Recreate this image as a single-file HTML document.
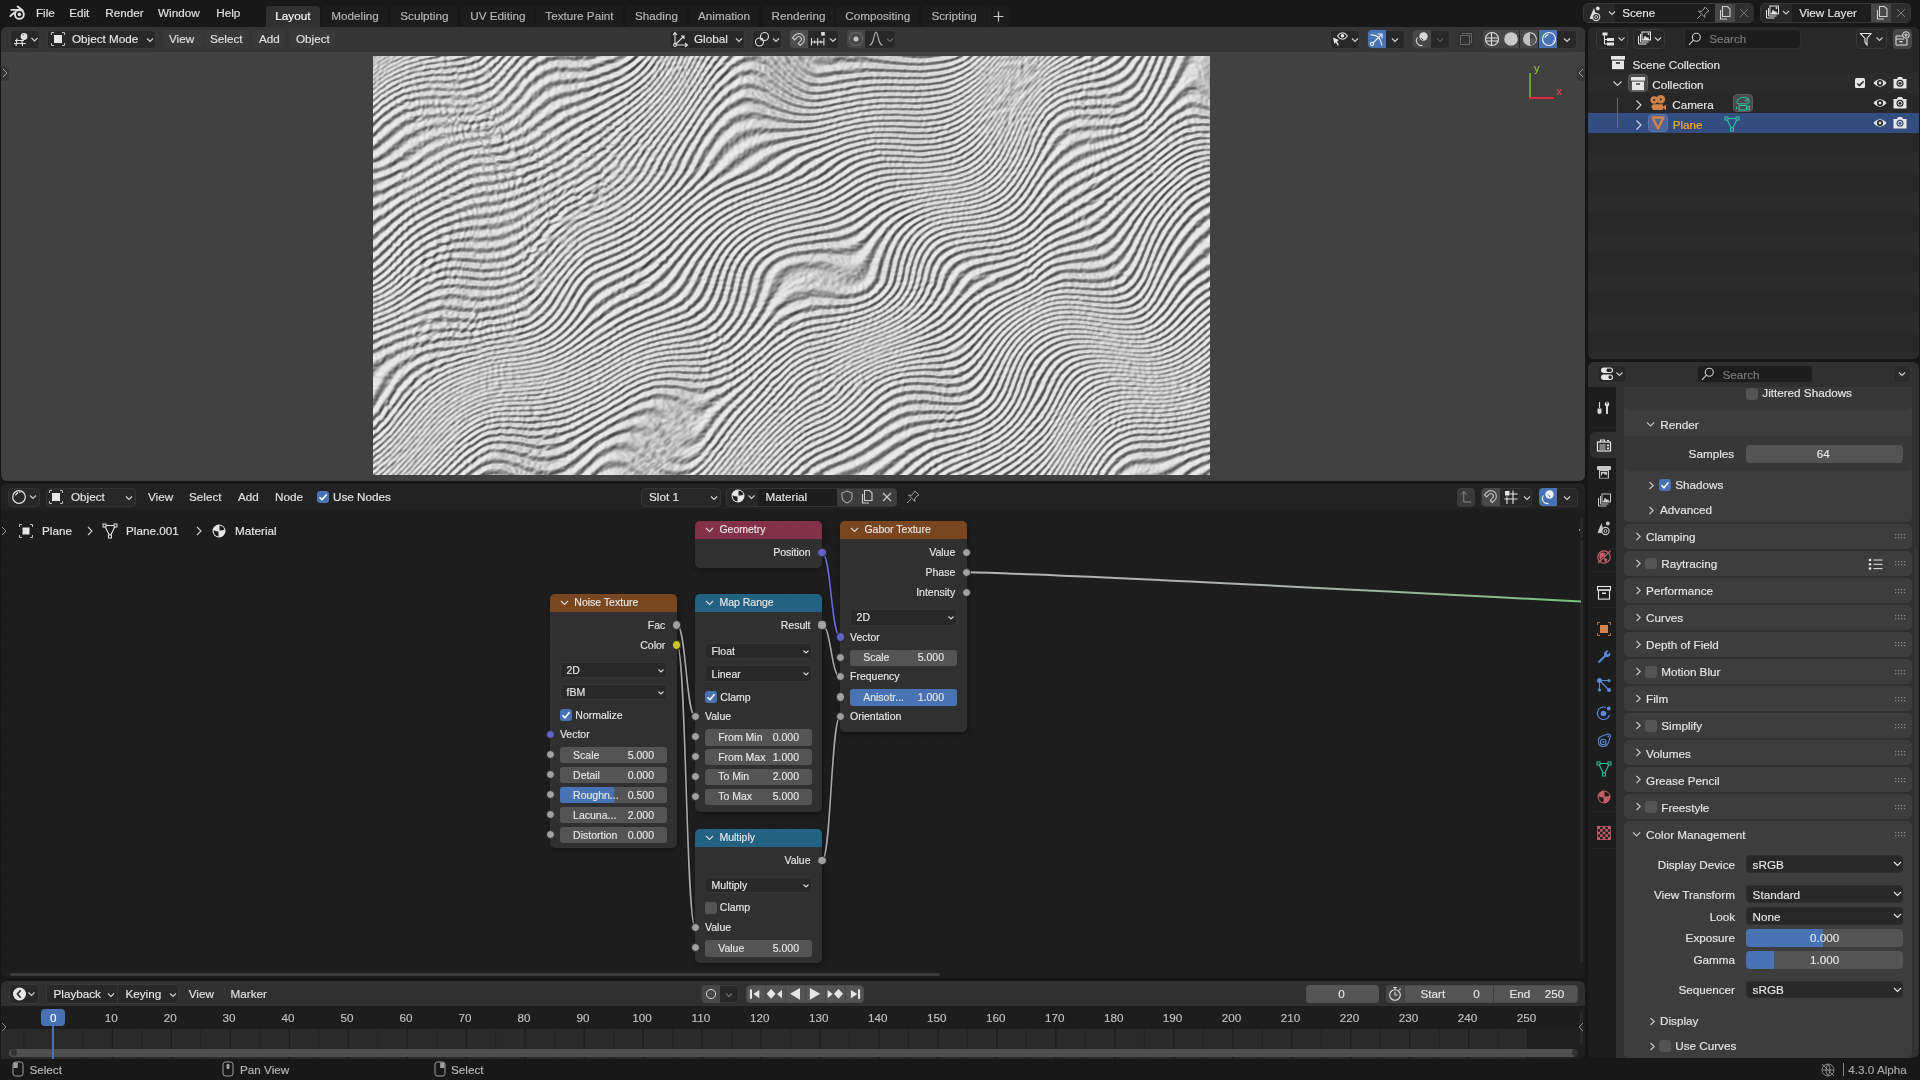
<!DOCTYPE html>
<html><head><meta charset="utf-8"><style>*{box-sizing:border-box;margin:0;padding:0}
html,body{width:1920px;height:1080px;overflow:hidden;background:#161616;font-family:"Liberation Sans",sans-serif;font-size:11.7px;color:#e6e6e6;position:relative}
.a{position:absolute}
.tx{position:absolute;white-space:nowrap;line-height:14px;-webkit-text-stroke:0.15px currentColor}
svg{position:absolute;overflow:visible}
</style></head><body>
<div id="root" style="position:absolute;left:0;top:0;width:1920px;height:1080px;overflow:hidden;will-change:transform">
<div class="a" style="left:0px;top:0px;width:1920px;height:27px;background:#181818;border-radius:0px;"></div>
<div class="a" style="left:1px;top:27px;width:1584px;height:454px;background:#414141;border-radius:6px;"></div>
<div class="a" style="left:1px;top:27px;width:1584px;height:25px;background:#353535;border-radius:0px;border-radius:6px 6px 0 0"></div>
<div class="a" style="left:1px;top:483px;width:1584px;height:495px;background:#1d1d1d;border-radius:6px;"></div>
<div class="a" style="left:1px;top:981px;width:1584px;height:78px;background:#1d1d1d;border-radius:6px;"></div>
<div class="a" style="left:1px;top:981px;width:1584px;height:25px;background:#303030;border-radius:0px;border-radius:6px 6px 0 0"></div>
<div class="a" style="left:1588px;top:27px;width:331px;height:332px;background:#282828;border-radius:6px;"></div>
<div class="a" style="left:1588px;top:27px;width:331px;height:25px;background:#282828;border-radius:0px;border-radius:6px 6px 0 0"></div>
<div class="a" style="left:1588px;top:362px;width:331px;height:696px;background:#303030;border-radius:6px;"></div>
<div class="a" style="left:0px;top:1059px;width:1920px;height:21px;background:#181818;border-radius:0px;"></div>
<svg style="left:0px;top:0px" width="30" height="27" viewBox="0 0 30 27"><g fill="none" stroke="#e0e0e0" stroke-width="1.9" stroke-linecap="round"><circle cx="19.4" cy="14.4" r="4.4"/><path d="M17.6 6.6 L22.6 10.6"/><path d="M11.3 9.9 L18.5 9.9"/><path d="M10.4 16.1 L14.6 12.6"/></g><circle cx="19.4" cy="14.4" r="1.8" fill="#e0e0e0"/></svg>
<div class="tx" style="left:35.90px;top:6.32px;color:#e0e0e0;font-size:11.7px;">File</div>
<div class="tx" style="left:69.20px;top:6.32px;color:#e0e0e0;font-size:11.7px;">Edit</div>
<div class="tx" style="left:105.30px;top:6.32px;color:#e0e0e0;font-size:11.7px;">Render</div>
<div class="tx" style="left:158.00px;top:6.32px;color:#e0e0e0;font-size:11.7px;">Window</div>
<div class="tx" style="left:216.20px;top:6.32px;color:#e0e0e0;font-size:11.7px;">Help</div>
<div class="a" style="left:266px;top:6px;width:54px;height:21px;background:#303030;border-radius:0px;border-radius:4px 4px 0 0"></div>
<div class="tx" style="left:275.30px;top:9.02px;color:#ffffff;font-size:11.7px;">Layout</div>
<div class="a" style="left:322.3px;top:6px;width:65.47812499999999px;height:21px;background:#1c1c1c;border-radius:0px;border-radius:4px 4px 0 0"></div>
<div class="tx" style="left:331.30px;top:9.02px;color:#b8b8b8;font-size:11.7px;">Modeling</div>
<div class="a" style="left:391.3px;top:6px;width:66.128125px;height:21px;background:#1c1c1c;border-radius:0px;border-radius:4px 4px 0 0"></div>
<div class="tx" style="left:400.30px;top:9.02px;color:#b8b8b8;font-size:11.7px;">Sculpting</div>
<div class="a" style="left:461.3px;top:6px;width:73.27499999999999px;height:21px;background:#1c1c1c;border-radius:0px;border-radius:4px 4px 0 0"></div>
<div class="tx" style="left:470.30px;top:9.02px;color:#b8b8b8;font-size:11.7px;">UV Editing</div>
<div class="a" style="left:536.3px;top:6px;width:86.28124999999999px;height:21px;background:#1c1c1c;border-radius:0px;border-radius:4px 4px 0 0"></div>
<div class="tx" style="left:545.30px;top:9.02px;color:#b8b8b8;font-size:11.7px;">Texture Paint</div>
<div class="a" style="left:626px;top:6px;width:60.934374999999996px;height:21px;background:#1c1c1c;border-radius:0px;border-radius:4px 4px 0 0"></div>
<div class="tx" style="left:635.00px;top:9.02px;color:#b8b8b8;font-size:11.7px;">Shading</div>
<div class="a" style="left:689px;top:6px;width:70.02499999999999px;height:21px;background:#1c1c1c;border-radius:0px;border-radius:4px 4px 0 0"></div>
<div class="tx" style="left:698.00px;top:9.02px;color:#b8b8b8;font-size:11.7px;">Animation</div>
<div class="a" style="left:762.5px;top:6px;width:71.984375px;height:21px;background:#1c1c1c;border-radius:0px;border-radius:4px 4px 0 0"></div>
<div class="tx" style="left:771.50px;top:9.02px;color:#b8b8b8;font-size:11.7px;">Rendering</div>
<div class="a" style="left:836.3px;top:6px;width:83.028125px;height:21px;background:#1c1c1c;border-radius:0px;border-radius:4px 4px 0 0"></div>
<div class="tx" style="left:845.30px;top:9.02px;color:#b8b8b8;font-size:11.7px;">Compositing</div>
<div class="a" style="left:922.4px;top:6px;width:63.51875px;height:21px;background:#1c1c1c;border-radius:0px;border-radius:4px 4px 0 0"></div>
<div class="tx" style="left:931.40px;top:9.02px;color:#b8b8b8;font-size:11.7px;">Scripting</div>
<div class="a" style="left:987px;top:6px;width:22px;height:21px;background:#1c1c1c;border-radius:0px;border-radius:4px 4px 0 0"></div>
<svg style="left:992px;top:10px" width="13" height="13" viewBox="0 0 13 13"><path d="M6.5 1.5 V11.5 M1.5 6.5 H11.5" stroke="#c8c8c8" stroke-width="1.2"/></svg>
<div class="a" style="left:1583px;top:3px;width:171px;height:20px;background:#282828;border-radius:5px;border:1px solid #383838"></div>
<div class="a" style="left:1615px;top:4px;width:100px;height:18px;background:#1d1d1d;border-radius:0px;"></div>
<div class="a" style="left:1714.5px;top:4px;width:20px;height:18px;background:#474747;border-radius:0px;"></div>
<div class="a" style="left:1734.5px;top:4px;width:19px;height:18px;background:#2e2e2e;border-radius:0px;border-radius:0 4px 4px 0"></div>
<svg style="left:1586px;top:4px" width="30" height="18" viewBox="0 0 30 18"><path d="M8 4 L3.5 14.5 Q8 16 11 14 Z" fill="#e0e0e0"/><circle cx="11.8" cy="4.5" r="1.9" fill="#e0e0e0"/><circle cx="10.2" cy="13" r="3.6" fill="#282828" stroke="#e0e0e0" stroke-width="1.1"/><circle cx="10.2" cy="13" r="1.5" fill="none" stroke="#e0e0e0" stroke-width="0.9"/><path d="M25 7.5 L28 10.5 L31 7.5" fill="none" stroke="#d0d0d0" stroke-width="1.1" transform="translate(-2,0)"/></svg>
<div class="tx" style="left:1622.20px;top:6.22px;color:#e6e6e6;font-size:11.7px;">Scene</div>
<svg style="left:1695px;top:5px" width="16" height="16" viewBox="0 0 16 16"><path d="M10 2 L14 6 L12 7 L9.5 10 L10 12.5 L3.5 6 L6 6.5 L9 4 Z" fill="none" stroke="#9a9a9a" stroke-width="1"/><path d="M6 10 L2 14" stroke="#9a9a9a" stroke-width="1"/></svg>
<svg style="left:1717px;top:5px" width="16" height="16" viewBox="0 0 16 16"><path d="M5.5 1.5 H10.5 L13 4 V11.5 H5.5 Z" fill="none" stroke="#d0d0d0" stroke-width="1.1"/><path d="M3.5 5 V14 H10" fill="none" stroke="#d0d0d0" stroke-width="1.1"/></svg>
<svg style="left:1737px;top:6px" width="14" height="14" viewBox="0 0 14 14"><path d="M3 3 L11 11 M11 3 L3 11" stroke="#7a7a7a" stroke-width="1"/></svg>
<div class="a" style="left:1760.3px;top:3px;width:151px;height:20px;background:#282828;border-radius:5px;border:1px solid #383838"></div>
<div class="a" style="left:1791.5px;top:4px;width:80px;height:18px;background:#1d1d1d;border-radius:0px;"></div>
<div class="a" style="left:1871.4px;top:4px;width:20px;height:18px;background:#474747;border-radius:0px;"></div>
<div class="a" style="left:1891.4px;top:4px;width:19px;height:18px;background:#2e2e2e;border-radius:0px;border-radius:0 4px 4px 0"></div>
<svg style="left:1764px;top:5px" width="30" height="16" viewBox="0 0 30 16"><rect x="6" y="1" width="8.5" height="8" fill="none" stroke="#e0e0e0" stroke-width="1"/><path d="M7 9 L9 4.5 L11 7 L12 6 L13.5 9 Z" fill="#e0e0e0"/><circle cx="12.5" cy="3" r="0.9" fill="#e0e0e0"/><path d="M4.5 3 V11 H12.5 M2.5 5 V13 H10.5" fill="none" stroke="#e0e0e0" stroke-width="1"/><path d="M19 6 L22 9 L25 6" fill="none" stroke="#d0d0d0" stroke-width="1.1"/></svg>
<div class="tx" style="left:1799.20px;top:6.22px;color:#e6e6e6;font-size:11.7px;">View Layer</div>
<svg style="left:1874px;top:5px" width="16" height="16" viewBox="0 0 16 16"><path d="M5.5 1.5 H10.5 L13 4 V11.5 H5.5 Z" fill="none" stroke="#d0d0d0" stroke-width="1.1"/><path d="M3.5 5 V14 H10" fill="none" stroke="#d0d0d0" stroke-width="1.1"/></svg>
<svg style="left:1894px;top:6px" width="14" height="14" viewBox="0 0 14 14"><path d="M3 3 L11 11 M11 3 L3 11" stroke="#7a7a7a" stroke-width="1"/></svg>
<div class="a" style="left:10px;top:29.5px;width:30px;height:19px;background:#282828;border-radius:4px;border:1px solid #393939"></div>
<svg style="left:12px;top:30px" width="30" height="18" viewBox="0 0 30 18"><g stroke="#e0e0e0" stroke-width="1.2" fill="none"><path d="M3 10.5 H12 M2 13.5 H14 M5 8.5 L4 16 M10 11 L10.5 16"/></g><circle cx="12" cy="6.5" r="3.4" fill="#e0e0e0"/><path d="M10.5 5.5 Q11 4.5 12 4.3" stroke="#555" stroke-width="0.7" fill="none"/><path d="M19.5 8 L22.5 11 L25.5 8" fill="none" stroke="#d0d0d0" stroke-width="1.1"/></svg>
<div class="a" style="left:47px;top:29.5px;width:109px;height:19px;background:#282828;border-radius:4px;border:1px solid #393939"></div>
<svg style="left:50px;top:31px" width="16" height="16" viewBox="0 0 16 16"><rect x="4" y="4" width="8" height="8" fill="#e6e6e6"/><path d="M1.5 4 V1.5 H4 M12 1.5 H14.5 V4 M14.5 12 V14.5 H12 M4 14.5 H1.5 V12" fill="none" stroke="#bdbdbd" stroke-width="1"/></svg>
<div class="tx" style="left:72.00px;top:31.82px;color:#e6e6e6;font-size:11.7px;">Object Mode</div>
<svg style="left:146px;top:36.5px" width="8" height="6" viewBox="0 0 8 6"><path d="M1 1.5 L4 4.5 L7 1.5" fill="none" stroke="#d0d0d0" stroke-width="1.2"/></svg>
<div class="a" style="left:163px;top:30px;width:40px;height:18px;background:#393939;border-radius:4px;"></div>
<div class="tx" style="left:169.00px;top:31.82px;color:#e0e0e0;font-size:11.7px;">View</div>
<div class="a" style="left:204px;top:30px;width:45px;height:18px;background:#393939;border-radius:4px;"></div>
<div class="tx" style="left:210.00px;top:31.82px;color:#e0e0e0;font-size:11.7px;">Select</div>
<div class="a" style="left:253px;top:30px;width:32px;height:18px;background:#393939;border-radius:4px;"></div>
<div class="tx" style="left:259.00px;top:31.82px;color:#e0e0e0;font-size:11.7px;">Add</div>
<div class="a" style="left:289px;top:30px;width:46px;height:18px;background:#393939;border-radius:4px;"></div>
<div class="tx" style="left:296.00px;top:31.82px;color:#e0e0e0;font-size:11.7px;">Object</div>
<div class="a" style="left:669px;top:29.5px;width:76px;height:19px;background:#282828;border-radius:4px;border:1px solid #393939"></div>
<svg style="left:672px;top:31px" width="17" height="17" viewBox="0 0 17 17"><g fill="none" stroke="#e0e0e0" stroke-width="1.1"><path d="M3 14 V2 M1 4 L3 1.5 L5 4 M3 14 H15 M13 12 L15.5 14 L13 16 M3 14 L12 5 M9 5 H12 V8"/><circle cx="3" cy="14" r="1.4" fill="#282828"/></g></svg>
<div class="tx" style="left:694.00px;top:31.82px;color:#e6e6e6;font-size:11.7px;">Global</div>
<svg style="left:735.4px;top:36.5px" width="8" height="6" viewBox="0 0 8 6"><path d="M1 1.5 L4 4.5 L7 1.5" fill="none" stroke="#d0d0d0" stroke-width="1.2"/></svg>
<div class="a" style="left:752px;top:29.5px;width:30px;height:19px;background:#282828;border-radius:4px;border:1px solid #393939"></div>
<svg style="left:754px;top:30px" width="16" height="18" viewBox="0 0 16 18"><g fill="none" stroke="#e0e0e0" stroke-width="1.1"><circle cx="10.5" cy="6.5" r="4"/><circle cx="5.5" cy="12" r="4"/></g><circle cx="7.8" cy="9.2" r="1.3" fill="#e0e0e0"/></svg>
<svg style="left:772px;top:36.5px" width="8" height="6" viewBox="0 0 8 6"><path d="M1 1.5 L4 4.5 L7 1.5" fill="none" stroke="#d0d0d0" stroke-width="1.2"/></svg>
<div class="a" style="left:789px;top:29.5px;width:50px;height:19px;background:#282828;border-radius:4px;border:1px solid #393939"></div>
<div class="a" style="left:789.5px;top:30px;width:18px;height:18px;background:#4d4d4d;border-radius:0px;border-radius:4px 0 0 4px"></div>
<svg style="left:790px;top:31px" width="17" height="16" viewBox="0 0 17 16"><g transform="rotate(45 8.5 8.5)" fill="none" stroke="#c8c8c8" stroke-width="1.1"><path d="M3 11.5 V8 A5.5 5.5 0 0 1 14 8 V11.5 H11 V8 A2.5 2.5 0 0 0 6 8 V11.5 Z"/></g></svg>
<svg style="left:810px;top:30px" width="20" height="18" viewBox="0 0 20 18"><g stroke="#e0e0e0" stroke-width="1.1" fill="none"><path d="M1.5 12 H14 M1.5 8 V15.5 M7.7 8 V15.5 M13.9 8 V15.5 M4.6 10.5 V13.5 M10.8 10.5 V13.5"/></g><rect x="11.2" y="2" width="3.6" height="3.6" fill="#e0e0e0"/></svg>
<svg style="left:829px;top:36.5px" width="8" height="6" viewBox="0 0 8 6"><path d="M1 1.5 L4 4.5 L7 1.5" fill="none" stroke="#d0d0d0" stroke-width="1.2"/></svg>
<div class="a" style="left:846px;top:29.5px;width:50px;height:19px;background:#282828;border-radius:4px;border:1px solid #393939"></div>
<div class="a" style="left:846.5px;top:30px;width:18px;height:18px;background:#474747;border-radius:0px;border-radius:4px 0 0 4px"></div>
<svg style="left:847px;top:30px" width="18" height="18" viewBox="0 0 18 18"><circle cx="9" cy="9" r="6.6" fill="none" stroke="#6a6a6a" stroke-width="1"/><circle cx="9" cy="9" r="2.5" fill="#c4c4c4"/></svg>
<svg style="left:868px;top:30px" width="18" height="18" viewBox="0 0 18 18"><path d="M1.5 15 Q4 15 5.5 9 Q7 2 8 2 Q9 2 10.5 9 Q12 15 14.5 15" fill="none" stroke="#bdbdbd" stroke-width="1.1"/></svg>
<svg style="left:886px;top:36.5px" width="8" height="6" viewBox="0 0 8 6"><path d="M1 1.5 L4 4.5 L7 1.5" fill="none" stroke="#6a6a6a" stroke-width="1.2"/></svg>
<div class="a" style="left:1330px;top:29.5px;width:30px;height:19px;background:#282828;border-radius:4px;border:1px solid #393939"></div>
<svg style="left:1331px;top:30px" width="22" height="18" viewBox="0 0 22 18"><path d="M6.5 6 Q11.5 -0.5 16.5 6 Q11.5 12.5 6.5 6 Z" fill="none" stroke="#e6e6e6" stroke-width="1.1"/><circle cx="11.5" cy="5.8" r="1.8" fill="#e6e6e6"/><path d="M2 7.5 L8 10 L6 11.5 L8 15 L6.8 15.8 L4.8 12.3 L3.3 14 Z" fill="#e6e6e6"/></svg>
<svg style="left:1350.5px;top:36.5px" width="8" height="6" viewBox="0 0 8 6"><path d="M1 1.5 L4 4.5 L7 1.5" fill="none" stroke="#d0d0d0" stroke-width="1.2"/></svg>
<div class="a" style="left:1367px;top:29.5px;width:38px;height:19px;background:#282828;border-radius:4px;border:1px solid #393939"></div>
<div class="a" style="left:1367.5px;top:30px;width:18px;height:18px;background:#4772b3;border-radius:0px;border-radius:4px 0 0 4px"></div>
<svg style="left:1368px;top:30px" width="18" height="18" viewBox="0 0 18 18"><g fill="none" stroke="#f0f0f0" stroke-width="1.1"><path d="M2.5 5 Q12 4 14 15.5"/><path d="M4.5 13.5 L13.5 4.5 M9.5 4 H14 V8.5"/><circle cx="4" cy="14" r="1.6" fill="#4772b3"/></g></svg>
<svg style="left:1391px;top:36.5px" width="8" height="6" viewBox="0 0 8 6"><path d="M1 1.5 L4 4.5 L7 1.5" fill="none" stroke="#d0d0d0" stroke-width="1.2"/></svg>
<div class="a" style="left:1412px;top:29.5px;width:38px;height:19px;background:#282828;border-radius:4px;border:1px solid #393939"></div>
<div class="a" style="left:1412.5px;top:30px;width:18px;height:18px;background:#474747;border-radius:0px;border-radius:4px 0 0 4px"></div>
<svg style="left:1413px;top:30px" width="18" height="18" viewBox="0 0 18 18"><circle cx="10.5" cy="6.5" r="4.2" fill="#d8d8d8"/><path d="M9.5 15.5 A5 5 0 0 1 4.5 7.5" fill="none" stroke="#d8d8d8" stroke-width="1.1"/><path d="M8 8 L10 10" stroke="#474747" stroke-width="1"/></svg>
<svg style="left:1436px;top:36.5px" width="8" height="6" viewBox="0 0 8 6"><path d="M1 1.5 L4 4.5 L7 1.5" fill="none" stroke="#5a5a5a" stroke-width="1.2"/></svg>
<div class="a" style="left:1457px;top:29.5px;width:18px;height:19px;background:#303030;border-radius:4px;border:1px solid #363636"></div>
<svg style="left:1458px;top:31px" width="16" height="16" viewBox="0 0 16 16"><g fill="none" stroke="#666" stroke-width="1"><rect x="2.5" y="4.5" width="9" height="9"/><path d="M4.5 4.5 V2.5 H13.5 V11.5 H11.5"/></g></svg>
<div class="a" style="left:1482px;top:29.5px;width:95px;height:19px;background:#282828;border-radius:4px;border:1px solid #393939"></div>
<div class="a" style="left:1482.5px;top:30px;width:18px;height:18px;background:#474747;border-radius:0px;border-radius:4px 0 0 4px"></div>
<div class="a" style="left:1501.3px;top:30px;width:18px;height:18px;background:#474747;border-radius:0px;"></div>
<div class="a" style="left:1520.3px;top:30px;width:18px;height:18px;background:#474747;border-radius:0px;"></div>
<div class="a" style="left:1539px;top:30px;width:18px;height:18px;background:#4772b3;border-radius:0px;"></div>
<svg style="left:1483px;top:30px" width="18" height="18" viewBox="0 0 18 18"><g fill="none" stroke="#e0e0e0" stroke-width="1.1"><circle cx="9" cy="9" r="6.5"/><path d="M2.5 8 H15.5 M2.5 11 H15.5 M8.5 2.5 V15.5"/></g></svg>
<svg style="left:1502px;top:30px" width="18" height="18" viewBox="0 0 18 18"><circle cx="9" cy="9" r="6.8" fill="#c8c8c8"/></svg>
<svg style="left:1521px;top:30px" width="18" height="18" viewBox="0 0 18 18"><circle cx="9" cy="9" r="6.3" fill="none" stroke="#e0e0e0" stroke-width="1.1"/><path d="M9 2.7 A6.3 6.3 0 0 0 2.7 9 A6.3 6.3 0 0 0 9 15.3 Z" fill="#c0c0c0"/><path d="M9 9 H15.3 A6.3 6.3 0 0 1 9 15.3 Z" fill="#5a5a5a"/></svg>
<svg style="left:1540px;top:30px" width="18" height="18" viewBox="0 0 18 18"><circle cx="9" cy="9" r="6.5" fill="none" stroke="#f0f0f0" stroke-width="1.2"/><path d="M5 8 Q5.5 5 8.5 4.5" fill="none" stroke="#f0f0f0" stroke-width="1.1"/><path d="M14 10 L12.5 13" stroke="#f0f0f0" stroke-width="0.8" stroke-dasharray="1 1"/></svg>
<svg style="left:1563px;top:36.5px" width="8" height="6" viewBox="0 0 8 6"><path d="M1 1.5 L4 4.5 L7 1.5" fill="none" stroke="#d0d0d0" stroke-width="1.2"/></svg>
<div class="a" style="left:373px;top:56px;width:837px;height:419px;overflow:hidden;background:#b0b0b0"><svg style="left:0;top:0;overflow:hidden" width="837" height="419">
<defs><linearGradient id="tlg" x1="0" y1="0" x2="0" y2="1"><stop offset="0" stop-color="#000" stop-opacity="0"/><stop offset="0.5" stop-color="#000" stop-opacity="1"/><stop offset="1" stop-color="#000" stop-opacity="0"/></linearGradient>
<pattern id="tpt" width="50" height="7.5" patternUnits="userSpaceOnUse" patternTransform="rotate(-30)"><rect width="50" height="7.5" fill="url(#tlg)"/></pattern></defs>
<filter id="tfp" x="0" y="0" width="100%" height="100%" color-interpolation-filters="sRGB">
<feTurbulence type="fractalNoise" baseFrequency="0.0045" numOctaves="2" seed="4" result="n"/>
<feDisplacementMap in="SourceGraphic" in2="n" scale="230" xChannelSelector="R" yChannelSelector="G" result="dm"/>
<feGaussianBlur in="dm" stdDeviation="1.1" result="c"/>
<feDiffuseLighting in="c" surfaceScale="3" diffuseConstant="1" lighting-color="#ffffff" result="d"><feDistantLight azimuth="225" elevation="50"/></feDiffuseLighting>
<feComponentTransfer in="d"><feFuncR type="linear" slope="0.68" intercept="0.245"/><feFuncG type="linear" slope="0.68" intercept="0.245"/><feFuncB type="linear" slope="0.68" intercept="0.245"/></feComponentTransfer>
</filter>
<rect x="-120" y="-120" width="1077" height="659" fill="url(#tpt)" filter="url(#tfp)"/>
</svg></div>
<div class="a" style="left:1529px;top:73px;width:2px;height:25px;background:#6fa11f;border-radius:0px;"></div>
<div class="a" style="left:1529px;top:97px;width:25px;height:2px;background:#d52b3a;border-radius:0px;"></div>
<div class="tx" style="left:1534.00px;top:61.06px;color:#8bc23a;font-size:11px;">y</div>
<div class="tx" style="left:1556.50px;top:84.06px;color:#e8404e;font-size:11px;">x</div>
<div class="a" style="left:1px;top:66px;width:8px;height:15px;background:#363636;border-radius:0px;border-radius:0 4px 4px 0"></div>
<svg style="left:1px;top:67px" width="8" height="12" viewBox="0 0 8 12"><path d="M2 2 L6 6 L2 10" fill="none" stroke="#9a9a9a" stroke-width="1"/></svg>
<div class="a" style="left:1577px;top:66px;width:8px;height:15px;background:#363636;border-radius:0px;border-radius:4px 0 0 4px"></div>
<svg style="left:1577px;top:67px" width="8" height="12" viewBox="0 0 8 12"><path d="M6 2 L2 6 L6 10" fill="none" stroke="#9a9a9a" stroke-width="1"/></svg>
<div class="a" style="left:1px;top:510px;width:1580px;height:468px;background-image:radial-gradient(circle, #262626 0.5px, transparent 1.1px);background-size:18.1px 18.1px;background-position:-2.5px 1.95px"></div>
<div class="a" style="left:1px;top:483px;width:1584px;height:26px;background:#222222;border-radius:0px;border-radius:6px 6px 0 0"></div>
<div class="a" style="left:8px;top:487.5px;width:31.5px;height:19px;background:#282828;border-radius:4px;border:1px solid #343434"></div>
<svg style="left:10px;top:488px" width="30" height="18" viewBox="0 0 30 18"><circle cx="9" cy="9" r="6.3" fill="none" stroke="#e6e6e6" stroke-width="1.2"/><path d="M5.6 7.5 Q6 5.3 8 4.6" fill="none" stroke="#e6e6e6" stroke-width="1.2"/><circle cx="9.8" cy="4.3" r="0.8" fill="#e6e6e6"/><path d="M20 7.5 L23 10.5 L26 7.5" fill="none" stroke="#d0d0d0" stroke-width="1.1"/></svg>
<div class="a" style="left:45.5px;top:487.5px;width:90px;height:19px;background:#282828;border-radius:4px;border:1px solid #343434"></div>
<svg style="left:48px;top:489px" width="16" height="16" viewBox="0 0 16 16"><rect x="4" y="4" width="8" height="8" fill="#e6e6e6"/><path d="M1.5 4 V1.5 H4 M12 1.5 H14.5 V4 M14.5 12 V14.5 H12 M4 14.5 H1.5 V12" fill="none" stroke="#bdbdbd" stroke-width="1"/></svg>
<div class="tx" style="left:71.00px;top:489.82px;color:#e6e6e6;font-size:11.7px;">Object</div>
<svg style="left:125px;top:494.5px" width="8" height="6" viewBox="0 0 8 6"><path d="M1 1.5 L4 4.5 L7 1.5" fill="none" stroke="#d0d0d0" stroke-width="1.2"/></svg>
<div class="tx" style="left:148.00px;top:489.82px;color:#e0e0e0;font-size:11.7px;">View</div>
<div class="tx" style="left:189.00px;top:489.82px;color:#e0e0e0;font-size:11.7px;">Select</div>
<div class="tx" style="left:238.00px;top:489.82px;color:#e0e0e0;font-size:11.7px;">Add</div>
<div class="tx" style="left:275.00px;top:489.82px;color:#e0e0e0;font-size:11.7px;">Node</div>
<div class="a" style="left:317px;top:491px;width:12px;height:12px;background:#4772b3;border-radius:3px;"></div>
<svg style="left:317px;top:491px" width="12" height="12" viewBox="0 0 12 12"><path d="M2.5 6.2 L5 8.7 L9.8 3.4" fill="none" stroke="#fff" stroke-width="1.6"/></svg>
<div class="tx" style="left:333.00px;top:489.82px;color:#e6e6e6;font-size:11.7px;">Use Nodes</div>
<div class="a" style="left:641px;top:487.5px;width:80px;height:19px;background:#282828;border-radius:4px;border:1px solid #343434"></div>
<div class="tx" style="left:649.00px;top:489.82px;color:#e6e6e6;font-size:11.7px;">Slot 1</div>
<svg style="left:710px;top:494.5px" width="8" height="6" viewBox="0 0 8 6"><path d="M1 1.5 L4 4.5 L7 1.5" fill="none" stroke="#d0d0d0" stroke-width="1.2"/></svg>
<div class="a" style="left:726.3px;top:487.5px;width:171px;height:19px;background:#282828;border-radius:4px;border:1px solid #343434"></div>
<div class="a" style="left:757.6px;top:488.5px;width:80px;height:17px;background:#1d1d1d;border-radius:0px;"></div>
<div class="a" style="left:837px;top:488.5px;width:20px;height:17px;background:#3d3d3d;border-radius:0px;"></div>
<div class="a" style="left:857px;top:488.5px;width:20px;height:17px;background:#3d3d3d;border-radius:0px;"></div>
<div class="a" style="left:877px;top:488.5px;width:19.5px;height:17px;background:#3d3d3d;border-radius:0px;border-radius:0 3px 3px 0"></div>
<svg style="left:730px;top:488px" width="30" height="18" viewBox="0 0 30 18"><circle cx="8" cy="8" r="6.5" fill="#e6e6e6"/><path d="M8.5 7.5 V2.4 A5.5 5.5 0 0 1 13.4 6.8 Q11 7.9 8.5 7.5 Z" fill="#1f1f1f"/><path d="M7.5 8.6 V13.6 A5.5 5.5 0 0 1 2.6 7.3 Q5 8.5 7.5 8.6 Z" fill="#1f1f1f"/><path d="M18.5 7.5 L21.5 10.5 L24.5 7.5" fill="none" stroke="#d0d0d0" stroke-width="1.1"/></svg>
<div class="tx" style="left:765.50px;top:489.82px;color:#e6e6e6;font-size:11.7px;">Material</div>
<svg style="left:839px;top:489px" width="16" height="16" viewBox="0 0 16 16"><path d="M8 2 L13 4 V8 Q13 12 8 14 Q3 12 3 8 V4 Z" fill="none" stroke="#a8a8a8" stroke-width="1.1"/></svg>
<svg style="left:859px;top:489px" width="16" height="16" viewBox="0 0 16 16"><path d="M5.5 1.5 H10.5 L13 4 V11.5 H5.5 Z" fill="none" stroke="#d0d0d0" stroke-width="1.1"/><path d="M3.5 5 V14 H10" fill="none" stroke="#d0d0d0" stroke-width="1.1"/></svg>
<svg style="left:879px;top:489px" width="16" height="16" viewBox="0 0 16 16"><path d="M4 4 L12 12 M12 4 L4 12" stroke="#d0d0d0" stroke-width="1.1"/></svg>
<svg style="left:905px;top:489px" width="16" height="16" viewBox="0 0 16 16"><path d="M10 2 L14 6 L12 7 L9.5 10 L10 12.5 L3.5 6 L6 6.5 L9 4 Z" fill="none" stroke="#a0a0a0" stroke-width="1"/><path d="M6 10 L2 14" stroke="#a0a0a0" stroke-width="1"/></svg>
<div class="a" style="left:1456.7px;top:487.5px;width:18.3px;height:19px;background:#3a3a3a;border-radius:4px;"></div>
<svg style="left:1457px;top:488px" width="18" height="18" viewBox="0 0 18 18"><path d="M4 6.5 L6.8 3.5 L9.6 6.5 M6.8 3.5 V14 H14" fill="none" stroke="#8a8a8a" stroke-width="1"/></svg>
<div class="a" style="left:1481.4px;top:487.5px;width:51px;height:19px;background:#282828;border-radius:4px;border:1px solid #343434"></div>
<div class="a" style="left:1482px;top:488px;width:18px;height:18px;background:#484848;border-radius:0px;border-radius:4px 0 0 4px"></div>
<svg style="left:1482px;top:488px" width="18" height="18" viewBox="0 0 18 18"><g transform="rotate(45 8.5 8.5)" fill="none" stroke="#bdbdbd" stroke-width="1.1"><path d="M3 11.5 V8 A5.5 5.5 0 0 1 14 8 V11.5 H11 V8 A2.5 2.5 0 0 0 6 8 V11.5 Z"/></g></svg>
<svg style="left:1503px;top:488px" width="18" height="18" viewBox="0 0 18 18"><rect x="2" y="3" width="4.5" height="4.5" fill="#e6e6e6"/><path d="M1.5 11 H14.5 M4 8.5 V16 M10 2.5 V16 M7 6 H14.5" stroke="#e6e6e6" stroke-width="1.1" fill="none"/></svg>
<svg style="left:1522.5px;top:494.5px" width="8" height="6" viewBox="0 0 8 6"><path d="M1 1.5 L4 4.5 L7 1.5" fill="none" stroke="#d0d0d0" stroke-width="1.2"/></svg>
<div class="a" style="left:1538.6px;top:487.5px;width:39px;height:19px;background:#282828;border-radius:4px;border:1px solid #343434"></div>
<div class="a" style="left:1539px;top:488px;width:18px;height:18px;background:#4772b3;border-radius:0px;border-radius:4px 0 0 4px"></div>
<svg style="left:1539px;top:488px" width="18" height="18" viewBox="0 0 18 18"><circle cx="10.5" cy="6.5" r="4.2" fill="#f0f0f0"/><path d="M9.5 15.5 A5 5 0 0 1 4.5 7.5" fill="none" stroke="#f0f0f0" stroke-width="1.1"/><path d="M8.5 6 L11 9" stroke="#4772b3" stroke-width="0.9"/></svg>
<svg style="left:1563px;top:494.5px" width="8" height="6" viewBox="0 0 8 6"><path d="M1 1.5 L4 4.5 L7 1.5" fill="none" stroke="#d0d0d0" stroke-width="1.2"/></svg>
<svg style="left:0px;top:525px" width="8" height="12" viewBox="0 0 8 12"><path d="M2 2 L6 6 L2 10" fill="none" stroke="#9a9a9a" stroke-width="1"/></svg>
<svg style="left:18px;top:523px" width="16" height="16" viewBox="0 0 16 16"><rect x="4.5" y="4.5" width="7" height="7" fill="#e6e6e6"/><path d="M1.5 4 V1.5 H4 M12 1.5 H14.5 V4 M14.5 12 V14.5 H12 M4 14.5 H1.5 V12" fill="none" stroke="#bdbdbd" stroke-width="1"/></svg>
<div class="tx" style="left:42.00px;top:524.32px;color:#e6e6e6;font-size:11.7px;">Plane</div>
<svg style="left:86px;top:525px" width="8" height="12" viewBox="0 0 8 12"><path d="M2 2 L6 6 L2 10" fill="none" stroke="#d0d0d0" stroke-width="1.1"/></svg>
<svg style="left:102px;top:523px" width="16" height="16" viewBox="0 0 16 16"><path d="M2.5 2.5 H13.5 L8 13.5 Z" fill="none" stroke="#e6e6e6" stroke-width="1.1"/><rect x="1" y="1" width="3" height="3" fill="#1d1d1d" stroke="#e6e6e6" stroke-width="1"/><rect x="12" y="1" width="3" height="3" fill="#1d1d1d" stroke="#e6e6e6" stroke-width="1"/><rect x="6.5" y="12" width="3" height="3" fill="#1d1d1d" stroke="#e6e6e6" stroke-width="1"/></svg>
<div class="tx" style="left:126.00px;top:524.32px;color:#e6e6e6;font-size:11.7px;">Plane.001</div>
<svg style="left:195px;top:525px" width="8" height="12" viewBox="0 0 8 12"><path d="M2 2 L6 6 L2 10" fill="none" stroke="#d0d0d0" stroke-width="1.1"/></svg>
<svg style="left:211px;top:523px" width="16" height="16" viewBox="0 0 16 16"><circle cx="8" cy="8" r="6.5" fill="#e6e6e6"/><path d="M8.5 7.5 V2.4 A5.5 5.5 0 0 1 13.4 6.8 Q11 7.9 8.5 7.5 Z" fill="#1d1d1d"/><path d="M7.5 8.6 V13.6 A5.5 5.5 0 0 1 2.6 7.3 Q5 8.5 7.5 8.6 Z" fill="#1d1d1d"/></svg>
<div class="tx" style="left:235.00px;top:524.32px;color:#e6e6e6;font-size:11.7px;">Material</div>
<svg style="left:1577px;top:524px" width="8" height="12" viewBox="0 0 8 12"><path d="M6 2 L2 6 L6 10" fill="none" stroke="#9a9a9a" stroke-width="1"/></svg>
<div class="a" style="left:1580px;top:518px;width:3px;height:20px;background:#2a2a2a;border-radius:2px;"></div>
<div class="a" style="left:1580px;top:540px;width:3px;height:422px;background:#2a2a2a;border-radius:2px;"></div>
<div class="a" style="left:10px;top:973px;width:930px;height:3px;background:#3a3a3a;border-radius:2px;"></div>
<div class="a" style="left:1px;top:510px;width:1580px;height:468px;overflow:hidden"><svg style="left:-1px;top:-510px" width="1920" height="1080"><path d="M822 552.5 C831.1 552.5 831.1 636.8 840.2 636.8" fill="none" stroke="#111" stroke-width="3.2" opacity="0.6"/><path d="M822 552.5 C831.1 552.5 831.1 636.8 840.2 636.8" fill="none" stroke="#6a6ad0" stroke-width="1.6"/><path d="M822 625 C831.1 625 831.1 676.8 840.2 676.8" fill="none" stroke="#111" stroke-width="3.2" opacity="0.6"/><path d="M822 625 C831.1 625 831.1 676.8 840.2 676.8" fill="none" stroke="#a8a8a8" stroke-width="1.6"/><path d="M822 860.6 C831.1 860.6 831.1 716.5 840.2 716.5" fill="none" stroke="#111" stroke-width="3.2" opacity="0.6"/><path d="M822 860.6 C831.1 860.6 831.1 716.5 840.2 716.5" fill="none" stroke="#a8a8a8" stroke-width="1.6"/><path d="M677 625 C686.1 625 686.1 716.4 695.2 716.4" fill="none" stroke="#111" stroke-width="3.2" opacity="0.6"/><path d="M677 625 C686.1 625 686.1 716.4 695.2 716.4" fill="none" stroke="#a8a8a8" stroke-width="1.6"/><path d="M677 645 C686.1 645 686.1 927.6 695.2 927.6" fill="none" stroke="#111" stroke-width="3.2" opacity="0.6"/><path d="M677 645 C686.1 645 686.1 927.6 695.2 927.6" fill="none" stroke="#a8a8a8" stroke-width="1.6"/><defs><linearGradient id="gl" x1="967" y1="0" x2="1585" y2="0" gradientUnits="userSpaceOnUse"><stop offset="0" stop-color="#b4b4b4"/><stop offset="0.55" stop-color="#aab2aa"/><stop offset="1" stop-color="#74c27a"/></linearGradient></defs><path d="M967 572.3 C1060 574 1400 592 1584.5 601.8" fill="none" stroke="url(#gl)" stroke-width="2"/></svg></div>
<div class="a" style="left:696.2px;top:523px;width:126.8px;height:47px;background:rgba(0,0,0,0.35);border-radius:5px;filter:blur(2px)"></div>
<div class="a" style="left:695.2px;top:521px;width:126.8px;height:47px;background:#303030;border-radius:5px;"></div>
<div class="a" style="left:695.2px;top:521px;width:126.8px;height:18.2px;background:#83304a;border-radius:0px;border-radius:5px 5px 0 0"></div>
<svg style="left:704.7px;top:527px" width="9" height="6" viewBox="0 0 9 6"><path d="M1 1 L4.5 4.5 L8 1" fill="none" stroke="#d8d8d8" stroke-width="1.1"/></svg>
<div class="tx" style="left:719.40px;top:522.48px;color:#e6e6e6;font-size:10.5px;">Geometry</div>
<div class="tx" style="left:410.50px;width:400px;text-align:right;top:545.18px;color:#e6e6e6;font-size:10.5px;">Position</div>
<div class="a" style="left:817.4px;top:547.9px;width:9.2px;height:9.2px;border-radius:50%;background:#a1a1a1;border:1px solid #262626"></div>
<div class="a" style="left:817.4px;top:547.9px;width:9.2px;height:9.2px;border-radius:50%;background:#6363c7;border:1px solid #262626"></div>
<div class="a" style="left:841.2px;top:523px;width:126.8px;height:210.6px;background:rgba(0,0,0,0.35);border-radius:5px;filter:blur(2px)"></div>
<div class="a" style="left:840.2px;top:521px;width:126.8px;height:210.6px;background:#303030;border-radius:5px;"></div>
<div class="a" style="left:840.2px;top:521px;width:126.8px;height:18.2px;background:#79461f;border-radius:0px;border-radius:5px 5px 0 0"></div>
<svg style="left:849.7px;top:527px" width="9" height="6" viewBox="0 0 9 6"><path d="M1 1 L4.5 4.5 L8 1" fill="none" stroke="#d8d8d8" stroke-width="1.1"/></svg>
<div class="tx" style="left:864.40px;top:522.48px;color:#e6e6e6;font-size:10.5px;">Gabor Texture</div>
<div class="tx" style="left:555.30px;width:400px;text-align:right;top:545.08px;color:#e6e6e6;font-size:10.5px;">Value</div>
<div class="a" style="left:962.1999999999999px;top:547.8px;width:9.2px;height:9.2px;border-radius:50%;background:#a1a1a1;border:1px solid #262626"></div>
<div class="tx" style="left:555.30px;width:400px;text-align:right;top:564.98px;color:#e6e6e6;font-size:10.5px;">Phase</div>
<div class="a" style="left:962.1999999999999px;top:567.6999999999999px;width:9.2px;height:9.2px;border-radius:50%;background:#a1a1a1;border:1px solid #262626"></div>
<div class="tx" style="left:555.30px;width:400px;text-align:right;top:585.18px;color:#e6e6e6;font-size:10.5px;">Intensity</div>
<div class="a" style="left:962.1999999999999px;top:587.9px;width:9.2px;height:9.2px;border-radius:50%;background:#a1a1a1;border:1px solid #262626"></div>
<div class="a" style="left:849.9000000000001px;top:608.8px;width:107.4px;height:16.8px;background:#282828;border-radius:3px;border:1px solid #363636"></div>
<div class="tx" style="left:856.60px;top:610.28px;color:#e6e6e6;font-size:10.5px;">2D</div>
<svg style="left:947.0px;top:614.8px" width="8" height="6" viewBox="0 0 8 6"><path d="M1.5 1.5 L4 4 L6.5 1.5" fill="none" stroke="#d8d8d8" stroke-width="1.1"/></svg>
<div class="tx" style="left:850.00px;top:629.68px;color:#e6e6e6;font-size:10.5px;">Vector</div>
<div class="a" style="left:835.6px;top:632.4px;width:9.2px;height:9.2px;border-radius:50%;background:#6363c7;border:1px solid #262626"></div>
<div class="a" style="left:849.9000000000001px;top:649.6px;width:107.4px;height:16.4px;background:#545454;border-radius:3px;"></div>
<div class="tx" style="left:863.20px;top:650.18px;color:#e6e6e6;font-size:10.5px;">Scale</div>
<div class="tx" style="left:544.00px;width:400px;text-align:right;top:650.18px;color:#e6e6e6;font-size:10.5px;">5.000</div>
<div class="a" style="left:835.6px;top:652.6px;width:9.2px;height:9.2px;border-radius:50%;background:#a1a1a1;border:1px solid #262626"></div>
<div class="tx" style="left:850.00px;top:669.48px;color:#e6e6e6;font-size:10.5px;">Frequency</div>
<div class="a" style="left:835.6px;top:672.1999999999999px;width:9.2px;height:9.2px;border-radius:50%;background:#a1a1a1;border:1px solid #262626"></div>
<div class="a" style="left:849.9000000000001px;top:689.4px;width:107.4px;height:16.4px;background:#545454;border-radius:3px;"></div>
<div class="a" style="left:849.9000000000001px;top:689.4px;width:107.4px;height:16.4px;background:#4772b3;border-radius:0px;border-radius:3px"></div>
<div class="tx" style="left:863.20px;top:689.98px;color:#e6e6e6;font-size:10.5px;">Anisotr...</div>
<div class="tx" style="left:544.00px;width:400px;text-align:right;top:689.98px;color:#e6e6e6;font-size:10.5px;">1.000</div>
<div class="a" style="left:835.6px;top:692.4px;width:9.2px;height:9.2px;border-radius:50%;background:#a1a1a1;border:1px solid #262626"></div>
<div class="tx" style="left:850.00px;top:709.18px;color:#e6e6e6;font-size:10.5px;">Orientation</div>
<div class="a" style="left:835.6px;top:711.9px;width:9.2px;height:9.2px;border-radius:50%;background:#a1a1a1;border:1px solid #262626"></div>
<div class="a" style="left:551.1px;top:596px;width:126.9px;height:253.6px;background:rgba(0,0,0,0.35);border-radius:5px;filter:blur(2px)"></div>
<div class="a" style="left:550.1px;top:594px;width:126.9px;height:253.6px;background:#303030;border-radius:5px;"></div>
<div class="a" style="left:550.1px;top:594px;width:126.9px;height:18.2px;background:#79461f;border-radius:0px;border-radius:5px 5px 0 0"></div>
<svg style="left:559.6px;top:600px" width="9" height="6" viewBox="0 0 9 6"><path d="M1 1 L4.5 4.5 L8 1" fill="none" stroke="#d8d8d8" stroke-width="1.1"/></svg>
<div class="tx" style="left:574.30px;top:595.48px;color:#e6e6e6;font-size:10.5px;">Noise Texture</div>
<div class="tx" style="left:265.30px;width:400px;text-align:right;top:617.68px;color:#e6e6e6;font-size:10.5px;">Fac</div>
<div class="a" style="left:672.1999999999999px;top:620.4px;width:9.2px;height:9.2px;border-radius:50%;background:#a1a1a1;border:1px solid #262626"></div>
<div class="tx" style="left:265.30px;width:400px;text-align:right;top:637.68px;color:#e6e6e6;font-size:10.5px;">Color</div>
<div class="a" style="left:672.1999999999999px;top:640.4px;width:9.2px;height:9.2px;border-radius:50%;background:#a1a1a1;border:1px solid #262626"></div>
<div class="a" style="left:672.1999999999999px;top:640.4px;width:9.2px;height:9.2px;border-radius:50%;background:#c7c729;border:1px solid #262626"></div>
<div class="a" style="left:559.8000000000001px;top:661.6px;width:107.5px;height:16.8px;background:#282828;border-radius:3px;border:1px solid #363636"></div>
<div class="tx" style="left:566.50px;top:663.08px;color:#e6e6e6;font-size:10.5px;">2D</div>
<svg style="left:657.0px;top:667.6px" width="8" height="6" viewBox="0 0 8 6"><path d="M1.5 1.5 L4 4 L6.5 1.5" fill="none" stroke="#d8d8d8" stroke-width="1.1"/></svg>
<div class="a" style="left:559.8000000000001px;top:683.5px;width:107.5px;height:16.8px;background:#282828;border-radius:3px;border:1px solid #363636"></div>
<div class="tx" style="left:566.50px;top:684.98px;color:#e6e6e6;font-size:10.5px;">fBM</div>
<svg style="left:657.0px;top:689.5px" width="8" height="6" viewBox="0 0 8 6"><path d="M1.5 1.5 L4 4 L6.5 1.5" fill="none" stroke="#d8d8d8" stroke-width="1.1"/></svg>
<div class="a" style="left:560.3px;top:709.1px;width:11.7px;height:11.7px;background:#4772b3;border-radius:3px;"></div>
<svg style="left:560.3px;top:709.1px" width="12" height="12" viewBox="0 0 12 12"><path d="M2.5 6.2 L5 8.7 L9.5 3.3" fill="none" stroke="#fff" stroke-width="1.6"/></svg>
<div class="tx" style="left:575.30px;top:707.78px;color:#e6e6e6;font-size:10.5px;">Normalize</div>
<div class="tx" style="left:559.90px;top:727.28px;color:#e6e6e6;font-size:10.5px;">Vector</div>
<div class="a" style="left:545.5px;top:730.0px;width:9.2px;height:9.2px;border-radius:50%;background:#6363c7;border:1px solid #262626"></div>
<div class="a" style="left:559.8000000000001px;top:747.0px;width:107.5px;height:16.4px;background:#545454;border-radius:3px;"></div>
<div class="tx" style="left:573.10px;top:747.58px;color:#e6e6e6;font-size:10.5px;">Scale</div>
<div class="tx" style="left:254.00px;width:400px;text-align:right;top:747.58px;color:#e6e6e6;font-size:10.5px;">5.000</div>
<div class="a" style="left:545.5px;top:750.0px;width:9.2px;height:9.2px;border-radius:50%;background:#a1a1a1;border:1px solid #262626"></div>
<div class="a" style="left:559.8000000000001px;top:767.0px;width:107.5px;height:16.4px;background:#545454;border-radius:3px;"></div>
<div class="tx" style="left:573.10px;top:767.58px;color:#e6e6e6;font-size:10.5px;">Detail</div>
<div class="tx" style="left:254.00px;width:400px;text-align:right;top:767.58px;color:#e6e6e6;font-size:10.5px;">0.000</div>
<div class="a" style="left:545.5px;top:770.0px;width:9.2px;height:9.2px;border-radius:50%;background:#a1a1a1;border:1px solid #262626"></div>
<div class="a" style="left:559.8000000000001px;top:787.0px;width:107.5px;height:16.4px;background:#545454;border-radius:3px;"></div>
<div class="a" style="left:559.8000000000001px;top:787.0px;width:53.75px;height:16.4px;background:#4772b3;border-radius:0px;border-radius:3px 0 0 3px"></div>
<div class="tx" style="left:573.10px;top:787.58px;color:#e6e6e6;font-size:10.5px;">Roughn...</div>
<div class="tx" style="left:254.00px;width:400px;text-align:right;top:787.58px;color:#e6e6e6;font-size:10.5px;">0.500</div>
<div class="a" style="left:545.5px;top:790.0px;width:9.2px;height:9.2px;border-radius:50%;background:#a1a1a1;border:1px solid #262626"></div>
<div class="a" style="left:559.8000000000001px;top:807.0px;width:107.5px;height:16.4px;background:#545454;border-radius:3px;"></div>
<div class="tx" style="left:573.10px;top:807.58px;color:#e6e6e6;font-size:10.5px;">Lacuna...</div>
<div class="tx" style="left:254.00px;width:400px;text-align:right;top:807.58px;color:#e6e6e6;font-size:10.5px;">2.000</div>
<div class="a" style="left:545.5px;top:810.0px;width:9.2px;height:9.2px;border-radius:50%;background:#a1a1a1;border:1px solid #262626"></div>
<div class="a" style="left:559.8000000000001px;top:827.0px;width:107.5px;height:16.4px;background:#545454;border-radius:3px;"></div>
<div class="tx" style="left:573.10px;top:827.58px;color:#e6e6e6;font-size:10.5px;">Distortion</div>
<div class="tx" style="left:254.00px;width:400px;text-align:right;top:827.58px;color:#e6e6e6;font-size:10.5px;">0.000</div>
<div class="a" style="left:545.5px;top:830.0px;width:9.2px;height:9.2px;border-radius:50%;background:#a1a1a1;border:1px solid #262626"></div>
<div class="a" style="left:696.2px;top:596px;width:126.8px;height:217.7px;background:rgba(0,0,0,0.35);border-radius:5px;filter:blur(2px)"></div>
<div class="a" style="left:695.2px;top:594px;width:126.8px;height:217.7px;background:#303030;border-radius:5px;"></div>
<div class="a" style="left:695.2px;top:594px;width:126.8px;height:18.2px;background:#246283;border-radius:0px;border-radius:5px 5px 0 0"></div>
<svg style="left:704.7px;top:600px" width="9" height="6" viewBox="0 0 9 6"><path d="M1 1 L4.5 4.5 L8 1" fill="none" stroke="#d8d8d8" stroke-width="1.1"/></svg>
<div class="tx" style="left:719.40px;top:595.48px;color:#e6e6e6;font-size:10.5px;">Map Range</div>
<div class="tx" style="left:410.50px;width:400px;text-align:right;top:617.68px;color:#e6e6e6;font-size:10.5px;">Result</div>
<div class="a" style="left:817.4px;top:620.4px;width:9.2px;height:9.2px;border-radius:50%;background:#a1a1a1;border:1px solid #262626"></div>
<div class="a" style="left:704.9000000000001px;top:642.5px;width:107.4px;height:16.8px;background:#282828;border-radius:3px;border:1px solid #363636"></div>
<div class="tx" style="left:711.60px;top:643.98px;color:#e6e6e6;font-size:10.5px;">Float</div>
<svg style="left:802.0px;top:648.5px" width="8" height="6" viewBox="0 0 8 6"><path d="M1.5 1.5 L4 4 L6.5 1.5" fill="none" stroke="#d8d8d8" stroke-width="1.1"/></svg>
<div class="a" style="left:704.9000000000001px;top:665.4px;width:107.4px;height:16.8px;background:#282828;border-radius:3px;border:1px solid #363636"></div>
<div class="tx" style="left:711.60px;top:666.88px;color:#e6e6e6;font-size:10.5px;">Linear</div>
<svg style="left:802.0px;top:671.4px" width="8" height="6" viewBox="0 0 8 6"><path d="M1.5 1.5 L4 4 L6.5 1.5" fill="none" stroke="#d8d8d8" stroke-width="1.1"/></svg>
<div class="a" style="left:705.3px;top:690.9px;width:11.7px;height:11.7px;background:#4772b3;border-radius:3px;"></div>
<svg style="left:705.3px;top:690.9px" width="12" height="12" viewBox="0 0 12 12"><path d="M2.5 6.2 L5 8.7 L9.5 3.3" fill="none" stroke="#fff" stroke-width="1.6"/></svg>
<div class="tx" style="left:720.30px;top:689.58px;color:#e6e6e6;font-size:10.5px;">Clamp</div>
<div class="tx" style="left:705.00px;top:709.08px;color:#e6e6e6;font-size:10.5px;">Value</div>
<div class="a" style="left:690.6px;top:711.8px;width:9.2px;height:9.2px;border-radius:50%;background:#a1a1a1;border:1px solid #262626"></div>
<div class="a" style="left:704.9000000000001px;top:729.1999999999999px;width:107.4px;height:16.4px;background:#545454;border-radius:3px;"></div>
<div class="tx" style="left:718.20px;top:729.78px;color:#e6e6e6;font-size:10.5px;">From Min</div>
<div class="tx" style="left:399.00px;width:400px;text-align:right;top:729.78px;color:#e6e6e6;font-size:10.5px;">0.000</div>
<div class="a" style="left:690.6px;top:732.1999999999999px;width:9.2px;height:9.2px;border-radius:50%;background:#a1a1a1;border:1px solid #262626"></div>
<div class="a" style="left:704.9000000000001px;top:748.9999999999999px;width:107.4px;height:16.4px;background:#545454;border-radius:3px;"></div>
<div class="tx" style="left:718.20px;top:749.58px;color:#e6e6e6;font-size:10.5px;">From Max</div>
<div class="tx" style="left:399.00px;width:400px;text-align:right;top:749.58px;color:#e6e6e6;font-size:10.5px;">1.000</div>
<div class="a" style="left:690.6px;top:751.9999999999999px;width:9.2px;height:9.2px;border-radius:50%;background:#a1a1a1;border:1px solid #262626"></div>
<div class="a" style="left:704.9000000000001px;top:768.8px;width:107.4px;height:16.4px;background:#545454;border-radius:3px;"></div>
<div class="tx" style="left:718.20px;top:769.38px;color:#e6e6e6;font-size:10.5px;">To Min</div>
<div class="tx" style="left:399.00px;width:400px;text-align:right;top:769.38px;color:#e6e6e6;font-size:10.5px;">2.000</div>
<div class="a" style="left:690.6px;top:771.8px;width:9.2px;height:9.2px;border-radius:50%;background:#a1a1a1;border:1px solid #262626"></div>
<div class="a" style="left:704.9000000000001px;top:788.5999999999999px;width:107.4px;height:16.4px;background:#545454;border-radius:3px;"></div>
<div class="tx" style="left:718.20px;top:789.18px;color:#e6e6e6;font-size:10.5px;">To Max</div>
<div class="tx" style="left:399.00px;width:400px;text-align:right;top:789.18px;color:#e6e6e6;font-size:10.5px;">5.000</div>
<div class="a" style="left:690.6px;top:791.5999999999999px;width:9.2px;height:9.2px;border-radius:50%;background:#a1a1a1;border:1px solid #262626"></div>
<div class="a" style="left:696.2px;top:831px;width:126.8px;height:133.6px;background:rgba(0,0,0,0.35);border-radius:5px;filter:blur(2px)"></div>
<div class="a" style="left:695.2px;top:829px;width:126.8px;height:133.6px;background:#303030;border-radius:5px;"></div>
<div class="a" style="left:695.2px;top:829px;width:126.8px;height:18.2px;background:#246283;border-radius:0px;border-radius:5px 5px 0 0"></div>
<svg style="left:704.7px;top:835px" width="9" height="6" viewBox="0 0 9 6"><path d="M1 1 L4.5 4.5 L8 1" fill="none" stroke="#d8d8d8" stroke-width="1.1"/></svg>
<div class="tx" style="left:719.40px;top:830.48px;color:#e6e6e6;font-size:10.5px;">Multiply</div>
<div class="tx" style="left:410.50px;width:400px;text-align:right;top:853.28px;color:#e6e6e6;font-size:10.5px;">Value</div>
<div class="a" style="left:817.4px;top:856.0px;width:9.2px;height:9.2px;border-radius:50%;background:#a1a1a1;border:1px solid #262626"></div>
<div class="a" style="left:704.9000000000001px;top:876.7px;width:107.4px;height:16.8px;background:#282828;border-radius:3px;border:1px solid #363636"></div>
<div class="tx" style="left:711.60px;top:878.18px;color:#e6e6e6;font-size:10.5px;">Multiply</div>
<svg style="left:802.0px;top:882.7px" width="8" height="6" viewBox="0 0 8 6"><path d="M1.5 1.5 L4 4 L6.5 1.5" fill="none" stroke="#d8d8d8" stroke-width="1.1"/></svg>
<div class="a" style="left:704.8px;top:901.7px;width:12.3px;height:12.3px;background:#545454;border-radius:3px;"></div>
<div class="tx" style="left:719.80px;top:900.38px;color:#e6e6e6;font-size:10.5px;">Clamp</div>
<div class="tx" style="left:705.00px;top:920.28px;color:#e6e6e6;font-size:10.5px;">Value</div>
<div class="a" style="left:690.6px;top:923.0px;width:9.2px;height:9.2px;border-radius:50%;background:#a1a1a1;border:1px solid #262626"></div>
<div class="a" style="left:704.9000000000001px;top:940.1999999999999px;width:107.4px;height:16.4px;background:#545454;border-radius:3px;"></div>
<div class="tx" style="left:718.20px;top:940.78px;color:#e6e6e6;font-size:10.5px;">Value</div>
<div class="tx" style="left:399.00px;width:400px;text-align:right;top:940.78px;color:#e6e6e6;font-size:10.5px;">5.000</div>
<div class="a" style="left:690.6px;top:943.1999999999999px;width:9.2px;height:9.2px;border-radius:50%;background:#a1a1a1;border:1px solid #262626"></div>
<div class="a" style="left:1px;top:1028.75px;width:1526.5px;height:30.5px;background:#2a2a2a;border-radius:0px;"></div>
<div class="a" style="left:1527.5px;top:1028.75px;width:57.5px;height:30.5px;background:#202020;border-radius:0px;border-radius:0 0 6px 0"></div>
<svg style="left:0;top:0" width="1920" height="1080"><rect x="23.41" y="1028.75" width="1" height="30.5" fill="#232323"/><rect x="52.90" y="1028.75" width="1" height="30.5" fill="#181818"/><rect x="82.38" y="1028.75" width="1" height="30.5" fill="#232323"/><rect x="111.87" y="1028.75" width="1" height="30.5" fill="#181818"/><rect x="141.35" y="1028.75" width="1" height="30.5" fill="#232323"/><rect x="170.84" y="1028.75" width="1" height="30.5" fill="#181818"/><rect x="200.33" y="1028.75" width="1" height="30.5" fill="#232323"/><rect x="229.81" y="1028.75" width="1" height="30.5" fill="#181818"/><rect x="259.29" y="1028.75" width="1" height="30.5" fill="#232323"/><rect x="288.78" y="1028.75" width="1" height="30.5" fill="#181818"/><rect x="318.26" y="1028.75" width="1" height="30.5" fill="#232323"/><rect x="347.75" y="1028.75" width="1" height="30.5" fill="#181818"/><rect x="377.23" y="1028.75" width="1" height="30.5" fill="#232323"/><rect x="406.72" y="1028.75" width="1" height="30.5" fill="#181818"/><rect x="436.20" y="1028.75" width="1" height="30.5" fill="#232323"/><rect x="465.69" y="1028.75" width="1" height="30.5" fill="#181818"/><rect x="495.17" y="1028.75" width="1" height="30.5" fill="#232323"/><rect x="524.66" y="1028.75" width="1" height="30.5" fill="#181818"/><rect x="554.14" y="1028.75" width="1" height="30.5" fill="#232323"/><rect x="583.63" y="1028.75" width="1" height="30.5" fill="#181818"/><rect x="613.12" y="1028.75" width="1" height="30.5" fill="#232323"/><rect x="642.60" y="1028.75" width="1" height="30.5" fill="#181818"/><rect x="672.08" y="1028.75" width="1" height="30.5" fill="#232323"/><rect x="701.57" y="1028.75" width="1" height="30.5" fill="#181818"/><rect x="731.05" y="1028.75" width="1" height="30.5" fill="#232323"/><rect x="760.54" y="1028.75" width="1" height="30.5" fill="#181818"/><rect x="790.02" y="1028.75" width="1" height="30.5" fill="#232323"/><rect x="819.51" y="1028.75" width="1" height="30.5" fill="#181818"/><rect x="849.00" y="1028.75" width="1" height="30.5" fill="#232323"/><rect x="878.48" y="1028.75" width="1" height="30.5" fill="#181818"/><rect x="907.96" y="1028.75" width="1" height="30.5" fill="#232323"/><rect x="937.45" y="1028.75" width="1" height="30.5" fill="#181818"/><rect x="966.93" y="1028.75" width="1" height="30.5" fill="#232323"/><rect x="996.42" y="1028.75" width="1" height="30.5" fill="#181818"/><rect x="1025.90" y="1028.75" width="1" height="30.5" fill="#232323"/><rect x="1055.39" y="1028.75" width="1" height="30.5" fill="#181818"/><rect x="1084.88" y="1028.75" width="1" height="30.5" fill="#232323"/><rect x="1114.36" y="1028.75" width="1" height="30.5" fill="#181818"/><rect x="1143.85" y="1028.75" width="1" height="30.5" fill="#232323"/><rect x="1173.33" y="1028.75" width="1" height="30.5" fill="#181818"/><rect x="1202.82" y="1028.75" width="1" height="30.5" fill="#232323"/><rect x="1232.30" y="1028.75" width="1" height="30.5" fill="#181818"/><rect x="1261.79" y="1028.75" width="1" height="30.5" fill="#232323"/><rect x="1291.27" y="1028.75" width="1" height="30.5" fill="#181818"/><rect x="1320.76" y="1028.75" width="1" height="30.5" fill="#232323"/><rect x="1350.24" y="1028.75" width="1" height="30.5" fill="#181818"/><rect x="1379.73" y="1028.75" width="1" height="30.5" fill="#232323"/><rect x="1409.21" y="1028.75" width="1" height="30.5" fill="#181818"/><rect x="1438.70" y="1028.75" width="1" height="30.5" fill="#232323"/><rect x="1468.18" y="1028.75" width="1" height="30.5" fill="#181818"/><rect x="1497.66" y="1028.75" width="1" height="30.5" fill="#232323"/><rect x="1527.15" y="1028.75" width="1" height="30.5" fill="#181818"/><rect x="1556.63" y="1028.75" width="1" height="30.5" fill="#232323"/></svg>
<div class="a" style="left:9.4px;top:1048.75px;width:1567px;height:7.8px;background:#4f4f4f;border-radius:4px;"></div>
<div class="a" style="left:10.5px;top:1049.3px;width:6.8px;height:6.8px;border-radius:50%;background:#333"></div>
<div class="a" style="left:1571.5px;top:1049.3px;width:6.8px;height:6.8px;border-radius:50%;background:#333"></div>
<div class="tx" style="left:-88.83px;width:400px;text-align:center;top:1011.32px;color:#c0c0c0;font-size:11.7px;">10</div>
<div class="tx" style="left:-29.86px;width:400px;text-align:center;top:1011.32px;color:#c0c0c0;font-size:11.7px;">20</div>
<div class="tx" style="left:29.11px;width:400px;text-align:center;top:1011.32px;color:#c0c0c0;font-size:11.7px;">30</div>
<div class="tx" style="left:88.08px;width:400px;text-align:center;top:1011.32px;color:#c0c0c0;font-size:11.7px;">40</div>
<div class="tx" style="left:147.05px;width:400px;text-align:center;top:1011.32px;color:#c0c0c0;font-size:11.7px;">50</div>
<div class="tx" style="left:206.02px;width:400px;text-align:center;top:1011.32px;color:#c0c0c0;font-size:11.7px;">60</div>
<div class="tx" style="left:264.99px;width:400px;text-align:center;top:1011.32px;color:#c0c0c0;font-size:11.7px;">70</div>
<div class="tx" style="left:323.96px;width:400px;text-align:center;top:1011.32px;color:#c0c0c0;font-size:11.7px;">80</div>
<div class="tx" style="left:382.93px;width:400px;text-align:center;top:1011.32px;color:#c0c0c0;font-size:11.7px;">90</div>
<div class="tx" style="left:441.90px;width:400px;text-align:center;top:1011.32px;color:#c0c0c0;font-size:11.7px;">100</div>
<div class="tx" style="left:500.87px;width:400px;text-align:center;top:1011.32px;color:#c0c0c0;font-size:11.7px;">110</div>
<div class="tx" style="left:559.84px;width:400px;text-align:center;top:1011.32px;color:#c0c0c0;font-size:11.7px;">120</div>
<div class="tx" style="left:618.81px;width:400px;text-align:center;top:1011.32px;color:#c0c0c0;font-size:11.7px;">130</div>
<div class="tx" style="left:677.78px;width:400px;text-align:center;top:1011.32px;color:#c0c0c0;font-size:11.7px;">140</div>
<div class="tx" style="left:736.75px;width:400px;text-align:center;top:1011.32px;color:#c0c0c0;font-size:11.7px;">150</div>
<div class="tx" style="left:795.72px;width:400px;text-align:center;top:1011.32px;color:#c0c0c0;font-size:11.7px;">160</div>
<div class="tx" style="left:854.69px;width:400px;text-align:center;top:1011.32px;color:#c0c0c0;font-size:11.7px;">170</div>
<div class="tx" style="left:913.66px;width:400px;text-align:center;top:1011.32px;color:#c0c0c0;font-size:11.7px;">180</div>
<div class="tx" style="left:972.63px;width:400px;text-align:center;top:1011.32px;color:#c0c0c0;font-size:11.7px;">190</div>
<div class="tx" style="left:1031.60px;width:400px;text-align:center;top:1011.32px;color:#c0c0c0;font-size:11.7px;">200</div>
<div class="tx" style="left:1090.57px;width:400px;text-align:center;top:1011.32px;color:#c0c0c0;font-size:11.7px;">210</div>
<div class="tx" style="left:1149.54px;width:400px;text-align:center;top:1011.32px;color:#c0c0c0;font-size:11.7px;">220</div>
<div class="tx" style="left:1208.51px;width:400px;text-align:center;top:1011.32px;color:#c0c0c0;font-size:11.7px;">230</div>
<div class="tx" style="left:1267.48px;width:400px;text-align:center;top:1011.32px;color:#c0c0c0;font-size:11.7px;">240</div>
<div class="tx" style="left:1326.45px;width:400px;text-align:center;top:1011.32px;color:#c0c0c0;font-size:11.7px;">250</div>
<div class="a" style="left:52.2px;top:1025px;width:2px;height:34px;background:#4772b3;border-radius:0px;"></div>
<div class="a" style="left:41.25px;top:1009px;width:24px;height:16.6px;background:#4772b3;border-radius:4px;"></div>
<div class="tx" style="left:-146.75px;width:400px;text-align:center;top:1010.52px;color:#ffffff;font-size:11.7px;">0</div>
<div class="a" style="left:8.75px;top:984.4px;width:30.6px;height:19.4px;background:#282828;border-radius:4px;border:1px solid #393939"></div>
<svg style="left:11px;top:985px" width="28" height="18" viewBox="0 0 28 18"><circle cx="8.5" cy="9" r="6.5" fill="#e6e6e6"/><path d="M9.6 5.2 L6.5 9 L9.6 12.8" fill="none" stroke="#303030" stroke-width="1.8"/><path d="M17.5 7.5 L20.5 10.5 L23.5 7.5" fill="none" stroke="#d0d0d0" stroke-width="1.1"/></svg>
<div class="a" style="left:45.6px;top:984.4px;width:133.8px;height:19.4px;background:#282828;border-radius:4px;border:1px solid #393939"></div>
<div class="a" style="left:117px;top:985px;width:1px;height:18px;background:#353535;border-radius:0px;"></div>
<div class="tx" style="left:53.50px;top:987.32px;color:#e6e6e6;font-size:11.7px;">Playback</div>
<svg style="left:106.7px;top:991.5px" width="8" height="6" viewBox="0 0 8 6"><path d="M1 1.5 L4 4.5 L7 1.5" fill="none" stroke="#d0d0d0" stroke-width="1.2"/></svg>
<div class="tx" style="left:125.40px;top:987.32px;color:#e6e6e6;font-size:11.7px;">Keying</div>
<svg style="left:168.7px;top:991.5px" width="8" height="6" viewBox="0 0 8 6"><path d="M1 1.5 L4 4.5 L7 1.5" fill="none" stroke="#d0d0d0" stroke-width="1.2"/></svg>
<div class="tx" style="left:188.75px;top:987.32px;color:#e0e0e0;font-size:11.7px;">View</div>
<div class="tx" style="left:230.50px;top:987.32px;color:#e0e0e0;font-size:11.7px;">Marker</div>
<div class="a" style="left:701.1px;top:984.75px;width:37.6px;height:18.6px;background:#282828;border-radius:4px;border:1px solid #393939"></div>
<div class="a" style="left:701.6px;top:985.2px;width:18px;height:17.6px;background:#474747;border-radius:0px;border-radius:4px 0 0 4px"></div>
<svg style="left:702px;top:985px" width="18" height="18" viewBox="0 0 18 18"><circle cx="9" cy="9" r="4.6" fill="none" stroke="#d8d8d8" stroke-width="1"/></svg>
<svg style="left:725px;top:991.5px" width="8" height="6" viewBox="0 0 8 6"><path d="M1 1.5 L4 4.5 L7 1.5" fill="none" stroke="#777" stroke-width="1.2"/></svg>
<div class="a" style="left:746px;top:984.75px;width:118px;height:18.6px;background:#545454;border-radius:4px;border:1px solid #4a4a4a"></div>
<div class="a" style="left:764.75px;top:985.5px;width:1px;height:17px;background:#474747;border-radius:0px;"></div>
<div class="a" style="left:785px;top:985.5px;width:1px;height:17px;background:#474747;border-radius:0px;"></div>
<div class="a" style="left:804.9px;top:985.5px;width:1px;height:17px;background:#474747;border-radius:0px;"></div>
<div class="a" style="left:824.6px;top:985.5px;width:1px;height:17px;background:#474747;border-radius:0px;"></div>
<div class="a" style="left:844.6px;top:985.5px;width:1px;height:17px;background:#474747;border-radius:0px;"></div>
<svg style="left:746px;top:985px" width="118" height="18" viewBox="0 0 118 18"><g fill="#e6e6e6"><rect x="3.9" y="4.4" width="2.1" height="9.4"/><path d="M13.3 5 V13.3 L7.4 9.1 Z"/><path d="M25.15 3.9 L29.6 8.85 L25.15 13.8 L20.7 8.85 Z"/><path d="M36 5 V13.3 L31 9.1 Z"/><path d="M54 2.9 V14.8 L44 8.85 Z"/><path d="M63.8 2.9 V14.8 L74.2 8.85 Z"/><path d="M81.6 5 V13.3 L86.6 9.1 Z"/><path d="M92.5 3.9 L97 8.85 L92.5 13.8 L88 8.85 Z"/><path d="M104.9 5 V13.3 L111.3 9.1 Z"/><rect x="112" y="4.4" width="2.1" height="9.4"/></g></svg>
<div class="a" style="left:1305.6px;top:984.7px;width:73.4px;height:18.4px;background:#545454;border-radius:4px;"></div>
<div class="tx" style="left:1141.60px;width:400px;text-align:center;top:987.32px;color:#e6e6e6;font-size:11.7px;">0</div>
<div class="a" style="left:1385.6px;top:984.7px;width:192.7px;height:18.4px;background:#545454;border-radius:4px;border:1px solid #4a4a4a"></div>
<div class="a" style="left:1386px;top:985.2px;width:18.4px;height:17.4px;background:#474747;border-radius:0px;border-radius:4px 0 0 4px"></div>
<div class="a" style="left:1404.4px;top:985.2px;width:1px;height:17.4px;background:#3e3e3e;border-radius:0px;"></div>
<div class="a" style="left:1493px;top:985.2px;width:1px;height:17.4px;background:#3e3e3e;border-radius:0px;"></div>
<svg style="left:1386px;top:985px" width="18" height="18" viewBox="0 0 18 18"><circle cx="9" cy="10" r="5.3" fill="none" stroke="#e0e0e0" stroke-width="1.1"/><path d="M9 6.8 V10 H11.5 M7.3 2.5 H10.7 M9 2.5 V4.6 M13.3 5 L14.6 3.8" fill="none" stroke="#e0e0e0" stroke-width="1.1"/></svg>
<div class="tx" style="left:1420.50px;top:987.32px;color:#e6e6e6;font-size:11.7px;">Start</div>
<div class="tx" style="left:1079.80px;width:400px;text-align:right;top:987.32px;color:#e6e6e6;font-size:11.7px;">0</div>
<div class="tx" style="left:1509.50px;top:987.32px;color:#e6e6e6;font-size:11.7px;">End</div>
<div class="tx" style="left:1164.20px;width:400px;text-align:right;top:987.32px;color:#e6e6e6;font-size:11.7px;">250</div>
<svg style="left:0px;top:1021px" width="8" height="12" viewBox="0 0 8 12"><path d="M2 2 L6 6 L2 10" fill="none" stroke="#8a8a8a" stroke-width="1"/></svg>
<div class="a" style="left:1580px;top:1012px;width:3px;height:32px;background:#2a2a2a;border-radius:2px;"></div>
<svg style="left:1577px;top:1021px" width="8" height="12" viewBox="0 0 8 12"><path d="M6 2 L2 6 L6 10" fill="none" stroke="#8a8a8a" stroke-width="1"/></svg>
<svg style="left:11.5px;top:1061px" width="12" height="16" viewBox="0 0 12 16"><rect x="1" y="1" width="10" height="14" rx="2.5" fill="none" stroke="#a0a0a0" stroke-width="1"/><path d="M1.5 7 V3.5 Q1.5 1.5 3.5 1.5 H5.8 V7 Z" fill="#a0a0a0"/></svg>
<div class="tx" style="left:29.40px;top:1063.32px;color:#b8b8b8;font-size:11.7px;">Select</div>
<svg style="left:222px;top:1061px" width="12" height="16" viewBox="0 0 12 16"><rect x="1" y="1" width="10" height="14" rx="2.5" fill="none" stroke="#a0a0a0" stroke-width="1"/><rect x="4.5" y="3" width="3" height="5" rx="1" fill="#a0a0a0"/></svg>
<div class="tx" style="left:240.00px;top:1063.32px;color:#b8b8b8;font-size:11.7px;">Pan View</div>
<svg style="left:433.5px;top:1061px" width="12" height="16" viewBox="0 0 12 16"><rect x="1" y="1" width="10" height="14" rx="2.5" fill="none" stroke="#a0a0a0" stroke-width="1"/><path d="M10.5 7 V3.5 Q10.5 1.5 8.5 1.5 H6.2 V7 Z" fill="#a0a0a0"/></svg>
<div class="tx" style="left:451.00px;top:1063.32px;color:#b8b8b8;font-size:11.7px;">Select</div>
<svg style="left:1820px;top:1062px" width="16" height="16" viewBox="0 0 16 16"><g fill="none" stroke="#8a8a8a" stroke-width="1"><circle cx="8" cy="8" r="6"/><path d="M2 8 H14 M8 2 Q4 8 8 14 M8 2 Q12 8 8 14 M2 2 L14 14"/></g></svg>
<div class="a" style="left:1843px;top:1063px;width:1px;height:13px;background:#8a8a8a;border-radius:0px;"></div>
<div class="tx" style="left:1848.30px;top:1063.32px;color:#a8a8a8;font-size:11.7px;">4.3.0 Alpha</div>
<div class="a" style="left:1588px;top:27px;width:331px;height:332px;overflow:hidden;border-radius:6px"><div class="a" style="left:0;top:46px;width:331px;height:20px;background:#2b2b2b"></div><div class="a" style="left:0;top:86px;width:331px;height:20px;background:#334d80"></div><div class="a" style="left:0;top:126px;width:331px;height:20px;background:#2b2b2b"></div><div class="a" style="left:0;top:166px;width:331px;height:20px;background:#2b2b2b"></div><div class="a" style="left:0;top:206px;width:331px;height:20px;background:#2b2b2b"></div><div class="a" style="left:0;top:246px;width:331px;height:20px;background:#2b2b2b"></div><div class="a" style="left:0;top:286px;width:331px;height:20px;background:#2b2b2b"></div><div class="a" style="left:0;top:326px;width:331px;height:6px;background:#2b2b2b"></div></div>
<div class="a" style="left:1596.3px;top:29.4px;width:31.5px;height:19.2px;background:#282828;border-radius:4px;border:1px solid #393939"></div>
<svg style="left:1600px;top:30px" width="30" height="18" viewBox="0 0 30 18"><rect x="2.5" y="2.5" width="5" height="3" fill="#e6e6e6"/><rect x="7" y="8" width="7" height="3" fill="#e6e6e6"/><rect x="7" y="12.5" width="7" height="3" fill="#e6e6e6"/><path d="M4.5 5.5 V14 H7 M4.5 9.5 H7" fill="none" stroke="#e6e6e6" stroke-width="1"/><path d="M18.5 7.5 L21.5 10.5 L24.5 7.5" fill="none" stroke="#d0d0d0" stroke-width="1.1"/></svg>
<div class="a" style="left:1633.3px;top:29.4px;width:31.5px;height:19.2px;background:#282828;border-radius:4px;border:1px solid #393939"></div>
<svg style="left:1636px;top:30px" width="30" height="18" viewBox="0 0 30 18"><rect x="6" y="2" width="8.5" height="8" fill="none" stroke="#e6e6e6" stroke-width="1"/><path d="M7 10 L9 5.5 L11 8 L12 7 L13.5 10 Z" fill="#e6e6e6"/><circle cx="12.5" cy="4" r="0.9" fill="#e6e6e6"/><path d="M4.5 4 V12 H12.5 M2.5 6 V14 H10.5" fill="none" stroke="#e6e6e6" stroke-width="1"/><path d="M19 7.5 L22 10.5 L25 7.5" fill="none" stroke="#d0d0d0" stroke-width="1.1"/></svg>
<div class="a" style="left:1683.6px;top:29.4px;width:117.3px;height:19.2px;background:#1d1d1d;border-radius:4px;border:1px solid #2e2e2e"></div>
<svg style="left:1687px;top:31px" width="16" height="16" viewBox="0 0 16 16"><circle cx="9.3" cy="6.3" r="4" fill="none" stroke="#d0d0d0" stroke-width="1.1"/><path d="M6.5 9.2 L2 13.8" stroke="#d0d0d0" stroke-width="1.1"/></svg>
<div class="tx" style="left:1709.30px;top:31.72px;color:#7c7c7c;font-size:11.7px;">Search</div>
<div class="a" style="left:1855.5px;top:29.4px;width:31.1px;height:19.2px;background:#282828;border-radius:4px;border:1px solid #393939"></div>
<svg style="left:1858px;top:30px" width="30" height="18" viewBox="0 0 30 18"><path d="M2.5 3.5 H13 L9 8.5 V15 L7 12.5 V8.5 Z" fill="none" stroke="#e6e6e6" stroke-width="1.1"/><path d="M18.5 7.5 L21.5 10.5 L24.5 7.5" fill="none" stroke="#d0d0d0" stroke-width="1.1"/></svg>
<div class="a" style="left:1892.5px;top:29.4px;width:19px;height:19.2px;background:#474747;border-radius:4px;"></div>
<svg style="left:1893px;top:30px" width="18" height="18" viewBox="0 0 18 18"><path d="M3 6 H10 M3 6 V15 H14 V9" fill="none" stroke="#e6e6e6" stroke-width="1"/><path d="M3 9 H11" stroke="#e6e6e6" stroke-width="1"/><rect x="6.5" y="11" width="3" height="1.3" fill="#e6e6e6"/><circle cx="13" cy="5" r="3.3" fill="#474747" stroke="#e6e6e6" stroke-width="1"/><path d="M13 3.3 V6.7 M11.3 5 H14.7" stroke="#e6e6e6" stroke-width="1"/></svg>
<svg style="left:1610px;top:55px" width="16" height="16" viewBox="0 0 16 16"><rect x="1" y="1" width="14" height="3.6" fill="#e6e6e6"/><rect x="2" y="5.6" width="12" height="8.6" fill="#e6e6e6"/><rect x="6" y="7.2" width="4" height="1.6" fill="#282828"/></svg>
<div class="tx" style="left:1632.40px;top:57.62px;color:#e6e6e6;font-size:11.7px;">Scene Collection</div>
<svg style="left:1612px;top:79px" width="12" height="10" viewBox="0 0 12 10"><path d="M1.5 2.5 L5.5 6.5 L9.5 2.5" fill="none" stroke="#d8d8d8" stroke-width="1.1"/></svg>
<div class="a" style="left:1628.1px;top:74px;width:19.8px;height:17.9px;background:#4a4a4a;border-radius:4px;border:1px solid #5a5a5a"></div>
<svg style="left:1630px;top:75.5px" width="16" height="16" viewBox="0 0 16 16"><rect x="1" y="1" width="14" height="3.6" fill="#e6e6e6"/><rect x="2" y="5.6" width="12" height="8.6" fill="#e6e6e6"/><rect x="6" y="7.2" width="4" height="1.6" fill="#4a4a4a"/></svg>
<div class="tx" style="left:1652.30px;top:77.82px;color:#e6e6e6;font-size:11.7px;">Collection</div>
<div class="a" style="left:1854.8px;top:77.9px;width:10.4px;height:10.4px;background:#e6e6e6;border-radius:1.5px;"></div>
<svg style="left:1854.8px;top:77.9px" width="11" height="11" viewBox="0 0 11 11"><path d="M2.3 5.5 L4.5 7.6 L8.6 3.2" fill="none" stroke="#2b2b2b" stroke-width="1.6"/></svg>
<svg style="left:1873px;top:76.5px" width="14" height="12" viewBox="0 0 14 12"><path d="M0.5 6 Q7 -1.5 13.5 6 Q7 13.5 0.5 6 Z" fill="#e6e6e6"/><circle cx="7" cy="6" r="3.1" fill="#2b2b2b"/><circle cx="7" cy="6" r="1.3" fill="#e6e6e6"/></svg>
<svg style="left:1892.6px;top:76.0px" width="14" height="13" viewBox="0 0 14 13"><path d="M0.5 3 H4 L5 1 H9 L10 3 H13.5 V12.5 H0.5 Z" fill="#e6e6e6"/><circle cx="7" cy="7.3" r="3.5" fill="#2b2b2b"/><circle cx="7" cy="7.3" r="2.3" fill="#e6e6e6"/><circle cx="7" cy="7.3" r="1.4" fill="#2b2b2b"/></svg>
<svg style="left:1873px;top:96.5px" width="14" height="12" viewBox="0 0 14 12"><path d="M0.5 6 Q7 -1.5 13.5 6 Q7 13.5 0.5 6 Z" fill="#e6e6e6"/><circle cx="7" cy="6" r="3.1" fill="#2b2b2b"/><circle cx="7" cy="6" r="1.3" fill="#e6e6e6"/></svg>
<svg style="left:1892.6px;top:96.0px" width="14" height="13" viewBox="0 0 14 13"><path d="M0.5 3 H4 L5 1 H9 L10 3 H13.5 V12.5 H0.5 Z" fill="#e6e6e6"/><circle cx="7" cy="7.3" r="3.5" fill="#282828"/><circle cx="7" cy="7.3" r="2.3" fill="#e6e6e6"/><circle cx="7" cy="7.3" r="1.4" fill="#282828"/></svg>
<svg style="left:1873px;top:116.5px" width="14" height="12" viewBox="0 0 14 12"><path d="M0.5 6 Q7 -1.5 13.5 6 Q7 13.5 0.5 6 Z" fill="#e6e6e6"/><circle cx="7" cy="6" r="3.1" fill="#2b2b2b"/><circle cx="7" cy="6" r="1.3" fill="#e6e6e6"/></svg>
<svg style="left:1892.6px;top:116.0px" width="14" height="13" viewBox="0 0 14 13"><path d="M0.5 3 H4 L5 1 H9 L10 3 H13.5 V12.5 H0.5 Z" fill="#e6e6e6"/><circle cx="7" cy="7.3" r="3.5" fill="#334d80"/><circle cx="7" cy="7.3" r="2.3" fill="#e6e6e6"/><circle cx="7" cy="7.3" r="1.4" fill="#334d80"/></svg>
<div class="a" style="left:1617px;top:98px;width:1px;height:30px;background:#6a6a6a;border-radius:0px;"></div>
<svg style="left:1634px;top:99px" width="10" height="12" viewBox="0 0 10 12"><path d="M2.5 1.5 L7 6 L2.5 10.5" fill="none" stroke="#d8d8d8" stroke-width="1.1"/></svg>
<svg style="left:1649.5px;top:94.5px" width="17" height="16" viewBox="0 0 17 16"><circle cx="4.2" cy="5" r="3.8" fill="#d0844a"/><circle cx="10.8" cy="4.3" r="4.3" fill="#d0844a"/><circle cx="4.2" cy="5" r="1.1" fill="#2b2b2b"/><circle cx="10.8" cy="4.3" r="1.1" fill="#2b2b2b"/><rect x="2.5" y="9.2" width="10.5" height="5.8" rx="1" fill="#d0844a"/><path d="M13 11.8 L16 9.8 V15 L13 13 Z" fill="#d0844a"/><rect x="1.5" y="10.6" width="1.5" height="2.5" fill="#d0844a"/></svg>
<div class="tx" style="left:1672.20px;top:97.92px;color:#e6e6e6;font-size:11.7px;">Camera</div>
<div class="a" style="left:1733.2px;top:94px;width:19.7px;height:17.8px;background:#4a4a4a;border-radius:4px;border:1px solid #5a5a5a"></div>
<svg style="left:1735px;top:96px" width="16" height="15" viewBox="0 0 16 15"><path d="M2 6.5 Q1.5 3.5 4 3.3 Q5 1 8 1.5 Q11 0.5 13.5 3 Q15 6 13 7.8 H3.5 Q2 7.8 2 6.5 Z" fill="none" stroke="#2ec4a0" stroke-width="1"/><circle cx="11.5" cy="4.3" r="1" fill="none" stroke="#2ec4a0" stroke-width="0.9"/><rect x="4" y="9.5" width="7.5" height="4.5" fill="none" stroke="#2ec4a0" stroke-width="1"/><path d="M11.5 11.7 L14.5 9.7 V14 L11.5 12.3 M1.5 10.5 V13" fill="none" stroke="#2ec4a0" stroke-width="1"/></svg>
<svg style="left:1634px;top:119px" width="10" height="12" viewBox="0 0 10 12"><path d="M2.5 1.5 L7 6 L2.5 10.5" fill="none" stroke="#d8d8d8" stroke-width="1.1"/></svg>
<div class="a" style="left:1648.2px;top:114px;width:19.5px;height:18px;background:#4d6598;border-radius:4px;border:1px solid #5d75a8"></div>
<svg style="left:1650px;top:115px" width="16" height="16" viewBox="0 0 16 16"><path d="M2.5 2.5 H13.5 L8 13.5 Z" fill="none" stroke="#d0844a" stroke-width="2.4" stroke-linejoin="round"/></svg>
<div class="tx" style="left:1672.70px;top:118.12px;color:#ffaf29;font-size:11.7px;">Plane</div>
<svg style="left:1723.5px;top:115.5px" width="16" height="16" viewBox="0 0 16 16"><path d="M2.5 2.5 H13.5 L8 13.5 Z" fill="none" stroke="#2ec4a0" stroke-width="1.1"/><rect x="1" y="1" width="3" height="3" fill="#334d80" stroke="#2ec4a0" stroke-width="1"/><rect x="12" y="1" width="3" height="3" fill="#334d80" stroke="#2ec4a0" stroke-width="1"/><rect x="6.5" y="12" width="3" height="3" fill="#334d80" stroke="#2ec4a0" stroke-width="1"/></svg>
<div class="a" style="left:1596.6px;top:364.8px;width:30.8px;height:18.5px;background:#282828;border-radius:4px;border:1px solid #363636"></div>
<svg style="left:1599px;top:365px" width="30" height="18" viewBox="0 0 30 18"><rect x="2" y="2.5" width="12" height="5.5" rx="2.75" fill="#e6e6e6"/><rect x="7.5" y="3.6" width="5.3" height="3.3" rx="1.4" fill="#282828"/><rect x="2" y="9.5" width="12" height="5.5" rx="2.75" fill="#e6e6e6"/><rect x="9.5" y="10.6" width="3.3" height="3.3" rx="1.4" fill="#282828"/><path d="M17.5 7.5 L20.5 10.5 L23.5 7.5" fill="none" stroke="#d0d0d0" stroke-width="1.1"/></svg>
<div class="a" style="left:1696.6px;top:364.8px;width:116.7px;height:18.5px;background:#1d1d1d;border-radius:4px;border:1px solid #2e2e2e"></div>
<svg style="left:1700px;top:366px" width="16" height="16" viewBox="0 0 16 16"><circle cx="9.3" cy="6.3" r="4" fill="none" stroke="#d0d0d0" stroke-width="1.1"/><path d="M6.5 9.2 L2 13.8" stroke="#d0d0d0" stroke-width="1.1"/></svg>
<div class="tx" style="left:1722.50px;top:367.72px;color:#7c7c7c;font-size:11.7px;">Search</div>
<div class="a" style="left:1892.7px;top:364.8px;width:18.3px;height:18.5px;background:#2b2b2b;border-radius:4px;border:1px solid #363636"></div>
<svg style="left:1897.8px;top:371px" width="8" height="6" viewBox="0 0 8 6"><path d="M1 1.5 L4 4.5 L7 1.5" fill="none" stroke="#d0d0d0" stroke-width="1.2"/></svg>
<div class="a" style="left:1588px;top:387px;width:28px;height:671px;background:#1d1d1d;border-radius:0px;border-radius:0 0 0 6px"></div>
<div class="a" style="left:1590px;top:431.8px;width:26px;height:25.9px;background:#303030;border-radius:5px;border-radius:5px 0 0 5px"></div>
<div class="a" style="left:1592px;top:427px;width:24px;height:1px;background:#242424;border-radius:0px;"></div>
<div class="a" style="left:1592px;top:571px;width:24px;height:1px;background:#242424;border-radius:0px;"></div>
<div class="a" style="left:1592px;top:607px;width:24px;height:1px;background:#242424;border-radius:0px;"></div>
<div class="a" style="left:1592px;top:811px;width:24px;height:1px;background:#242424;border-radius:0px;"></div>
<div class="a" style="left:1592px;top:847.8px;width:24px;height:1px;background:#242424;border-radius:0px;"></div>
<svg style="left:1596px;top:400px" width="16" height="16" viewBox="0 0 16 16"><path d="M3.5 2 V8" stroke="#d8d8d8" stroke-width="1.1"/><path d="M1.5 8.5 H5.5 V13 Q3.5 15 1.5 13 Z" fill="#d8d8d8"/><path d="M10.5 1.5 Q8 3 9 5.5 L10 6.5 V13.5 Q11 14.8 12 13.5 V6.5 L13 5.5 Q14 3 11.5 1.5 V4 H10.5 Z" fill="#d8d8d8"/></svg>
<svg style="left:1596px;top:436.5px" width="16" height="16" viewBox="0 0 16 16"><rect x="1.5" y="5" width="13" height="9" fill="none" stroke="#e6e6e6" stroke-width="1.2"/><path d="M4.5 5 V3 H8.5 V5 M11 3.5 H13" stroke="#e6e6e6" stroke-width="1.1" fill="none"/><path d="M3.5 8 H9.5 M3.5 10 H9.5 M3.5 12 H9.5" stroke="#e6e6e6" stroke-width="0.9"/><rect x="11" y="7.5" width="2" height="1.8" fill="#e6e6e6"/><rect x="11" y="10.5" width="2" height="1.8" fill="#e6e6e6"/></svg>
<svg style="left:1596px;top:464px" width="16" height="16" viewBox="0 0 16 16"><rect x="1" y="2" width="14" height="4" rx="1" fill="#c8c8c8"/><rect x="3" y="6" width="10" height="8.5" fill="#c8c8c8"/><path d="M4.5 13 L7 9 L9 11 L10 10 L11.5 13 Z" fill="#1d1d1d"/><rect x="4.5" y="7.5" width="7" height="6" fill="none" stroke="#1d1d1d" stroke-width="0.8"/></svg>
<svg style="left:1596px;top:492px" width="16" height="16" viewBox="0 0 16 16"><rect x="6" y="2" width="8.5" height="8" fill="none" stroke="#c8c8c8" stroke-width="1"/><path d="M7 10 L9 5.5 L11 8 L12 7 L13.5 10 Z" fill="#c8c8c8"/><path d="M4.5 4 V12 H12.5 M2.5 6 V14 H10.5" fill="none" stroke="#c8c8c8" stroke-width="1"/></svg>
<svg style="left:1596px;top:520.3px" width="16" height="16" viewBox="0 0 16 16"><path d="M5.5 3 L1.5 12.5 Q5 14 8 12 Z" fill="#c8c8c8"/><circle cx="11.8" cy="3.5" r="1.9" fill="#c8c8c8"/><circle cx="9.5" cy="11" r="3.6" fill="#1d1d1d" stroke="#c8c8c8" stroke-width="1.1"/><circle cx="9.5" cy="11" r="1.5" fill="none" stroke="#c8c8c8" stroke-width="0.9"/></svg>
<svg style="left:1596px;top:549px" width="16" height="16" viewBox="0 0 16 16"><circle cx="8" cy="8" r="6.2" fill="none" stroke="#c45f6a" stroke-width="1.3"/><path d="M4.5 3.8 Q7.5 3.2 9.2 4.2 Q8.2 5.6 9 6.6 Q6.8 7 6.2 8.3 Q5.2 9 4.6 10.8 Q3 9 3.3 6.5 Z" fill="#c45f6a"/><path d="M7.8 9.2 Q10.5 9 11.5 10.5 Q11 12.5 9.2 13.3 Q8 11.5 7.8 9.2 Z" fill="#c45f6a"/><path d="M2 14 L14.5 1.8" stroke="#c45f6a" stroke-width="1.2"/></svg>
<svg style="left:1596px;top:585.1px" width="16" height="16" viewBox="0 0 16 16"><rect x="1.5" y="1.5" width="13" height="3.6" fill="none" stroke="#e6e6e6" stroke-width="1.1"/><rect x="2.5" y="5.1" width="11" height="9" fill="none" stroke="#e6e6e6" stroke-width="1.1"/><rect x="6" y="7.5" width="4" height="1.5" fill="#e6e6e6"/></svg>
<svg style="left:1596px;top:621.3px" width="16" height="16" viewBox="0 0 16 16"><rect x="4" y="4" width="8" height="8" fill="#d0844a"/><path d="M1.5 4 V1.5 H4 M12 1.5 H14.5 V4 M14.5 12 V14.5 H12 M4 14.5 H1.5 V12" fill="none" stroke="#b07040" stroke-width="1"/></svg>
<svg style="left:1596px;top:649px" width="16" height="16" viewBox="0 0 16 16"><path d="M12.5 1.8 Q9.5 1 8.3 3.5 Q7.7 5 8.3 6.3 L2 12.5 Q2 14 3.5 14 L9.7 7.7 Q11 8.3 12.5 7.7 Q15 6.5 14.2 3.5 L12 5.5 L10.5 4.5 Z" fill="#5a8ad8"/></svg>
<svg style="left:1596px;top:676.8px" width="16" height="16" viewBox="0 0 16 16"><circle cx="3.5" cy="3.5" r="2.5" fill="#5a8ad8"/><circle cx="13" cy="3.5" r="1.6" fill="#5a8ad8"/><circle cx="3.5" cy="13" r="1.6" fill="#5a8ad8"/><circle cx="13" cy="13" r="2" fill="#5a8ad8"/><path d="M3.5 3.5 H13 M3.5 3.5 V13 M3.5 3.5 L13 13" stroke="#5a8ad8" stroke-width="1.1"/></svg>
<svg style="left:1596px;top:704.6px" width="16" height="16" viewBox="0 0 16 16"><circle cx="7.5" cy="8.5" r="2.8" fill="#5a8ad8"/><path d="M13.5 10 A6.2 6.2 0 1 1 10 2.6" fill="none" stroke="#5a8ad8" stroke-width="1.1"/><circle cx="12.7" cy="3.5" r="1.9" fill="#5a8ad8"/></svg>
<svg style="left:1596px;top:732.7px" width="16" height="16" viewBox="0 0 16 16"><path d="M2.5 9 Q1.5 5 6 3 L12 1 Q14.5 0.8 14.5 3.5 L12.5 9.5 Q10.5 14 6.5 13.5 Q2.5 13 2.5 9 Z" fill="none" stroke="#5a8ad8" stroke-width="1.1"/><circle cx="7.2" cy="9" r="2.8" fill="none" stroke="#5a8ad8" stroke-width="1.1"/><circle cx="7.2" cy="9" r="1" fill="#5a8ad8"/><circle cx="12.3" cy="3.3" r="0.9" fill="#5a8ad8"/></svg>
<svg style="left:1596px;top:760.5px" width="16" height="16" viewBox="0 0 16 16"><path d="M2.5 2.5 H13.5 L8 13.5 Z" fill="none" stroke="#2ec4a0" stroke-width="1.1"/><rect x="1" y="1" width="3" height="3" fill="#1d1d1d" stroke="#2ec4a0" stroke-width="1"/><rect x="12" y="1" width="3" height="3" fill="#1d1d1d" stroke="#2ec4a0" stroke-width="1"/><rect x="6.5" y="12" width="3" height="3" fill="#1d1d1d" stroke="#2ec4a0" stroke-width="1"/></svg>
<svg style="left:1596px;top:789.2px" width="16" height="16" viewBox="0 0 16 16"><circle cx="8" cy="8" r="6.5" fill="#c45f6a"/><path d="M8.5 7.5 V2.4 A5.5 5.5 0 0 1 13.4 6.8 Q11 7.9 8.5 7.5 Z" fill="#1d1d1d"/><path d="M7.5 8.6 V13.6 A5.5 5.5 0 0 1 2.6 7.3 Q5 8.5 7.5 8.6 Z" fill="#1d1d1d"/></svg>
<svg style="left:1596px;top:825px" width="16" height="16" viewBox="0 0 16 16"><rect x="1.5" y="1.5" width="13" height="13" fill="#1d1d1d"/><rect x="1.5" y="1.5" width="2.6" height="2.6" fill="#c45f6a"/><rect x="1.5" y="6.7" width="2.6" height="2.6" fill="#c45f6a"/><rect x="1.5" y="11.9" width="2.6" height="2.6" fill="#c45f6a"/><rect x="4.1" y="4.1" width="2.6" height="2.6" fill="#c45f6a"/><rect x="4.1" y="9.3" width="2.6" height="2.6" fill="#c45f6a"/><rect x="6.7" y="1.5" width="2.6" height="2.6" fill="#c45f6a"/><rect x="6.7" y="6.7" width="2.6" height="2.6" fill="#c45f6a"/><rect x="6.7" y="11.9" width="2.6" height="2.6" fill="#c45f6a"/><rect x="9.3" y="4.1" width="2.6" height="2.6" fill="#c45f6a"/><rect x="9.3" y="9.3" width="2.6" height="2.6" fill="#c45f6a"/><rect x="11.9" y="1.5" width="2.6" height="2.6" fill="#c45f6a"/><rect x="11.9" y="6.7" width="2.6" height="2.6" fill="#c45f6a"/><rect x="11.9" y="11.9" width="2.6" height="2.6" fill="#c45f6a"/><rect x="1.5" y="1.5" width="13" height="13" fill="none" stroke="#c45f6a" stroke-width="0.8"/></svg>
<div class="a" style="left:1914px;top:550px;width:3px;height:500px;background:#383838;border-radius:2px;"></div>
<div class="a" style="left:1624.3px;top:387px;width:287.6px;height:135px;background:#3d3d3d;border-radius:0px;border-radius:0 0 5px 5px"></div>
<div class="a" style="left:1624.3px;top:387px;width:287.6px;height:24px;background:#373737;border-radius:0px;border-radius:0 0 5px 5px"></div>
<div class="a" style="left:1745.7px;top:387.5px;width:12.3px;height:12.3px;background:#545454;border-radius:3px;"></div>
<div class="tx" style="left:1762.30px;top:386.32px;color:#e6e6e6;font-size:11.7px;">Jittered Shadows</div>
<div class="a" style="left:1624.3px;top:411px;width:287.6px;height:25px;background:#3d3d3d;border-radius:0px;"></div>
<svg style="left:1645.6px;top:420.5px" width="10" height="7" viewBox="0 0 10 7"><path d="M1 1.3 L4.6 5 L8.2 1.3" fill="none" stroke="#c8c8c8" stroke-width="1.1"/></svg>
<div class="tx" style="left:1660.30px;top:417.52px;color:#e6e6e6;font-size:11.7px;">Render</div>
<div class="a" style="left:1624.3px;top:436px;width:287.6px;height:35.4px;background:#373737;border-radius:0px;border-radius:0 0 5px 5px"></div>
<div class="tx" style="left:1334.10px;width:400px;text-align:right;top:447.22px;color:#e6e6e6;font-size:11.7px;">Samples</div>
<div class="a" style="left:1745.7px;top:444.7px;width:157.3px;height:18.5px;background:#545454;border-radius:4px;"></div>
<div class="tx" style="left:1623.30px;width:400px;text-align:center;top:447.22px;color:#e6e6e6;font-size:11.7px;">64</div>
<svg style="left:1648px;top:480.7px" width="8" height="9" viewBox="0 0 8 9"><path d="M1.5 1 L5.2 4.5 L1.5 8" fill="none" stroke="#c8c8c8" stroke-width="1.1"/></svg>
<div class="a" style="left:1659px;top:479.3px;width:11.7px;height:11.7px;background:#4772b3;border-radius:3px;"></div>
<svg style="left:1659px;top:479.3px" width="12" height="12" viewBox="0 0 12 12"><path d="M2.5 6.2 L5 8.7 L9.5 3.3" fill="none" stroke="#fff" stroke-width="1.6"/></svg>
<div class="tx" style="left:1675.20px;top:478.02px;color:#e6e6e6;font-size:11.7px;">Shadows</div>
<svg style="left:1648px;top:505.5px" width="8" height="9" viewBox="0 0 8 9"><path d="M1.5 1 L5.2 4.5 L1.5 8" fill="none" stroke="#c8c8c8" stroke-width="1.1"/></svg>
<div class="tx" style="left:1660.00px;top:503.02px;color:#e6e6e6;font-size:11.7px;">Advanced</div>
<div class="a" style="left:1624.3px;top:524px;width:287.6px;height:24.8px;background:#3d3d3d;border-radius:5px;"></div>
<svg style="left:1634.6px;top:531.9px" width="8" height="9" viewBox="0 0 8 9"><path d="M1.5 1 L5.2 4.5 L1.5 8" fill="none" stroke="#c8c8c8" stroke-width="1.1"/></svg>
<div class="tx" style="left:1646.10px;top:530.12px;color:#e6e6e6;font-size:11.7px;">Clamping</div>
<svg style="left:1894.6px;top:534.1999999999999px" width="12" height="5" viewBox="0 0 12 5"><rect x="0" y="0" width="1.3" height="1.3" fill="#8a8a8a"/><rect x="0" y="3" width="1.3" height="1.3" fill="#8a8a8a"/><rect x="3" y="0" width="1.3" height="1.3" fill="#8a8a8a"/><rect x="3" y="3" width="1.3" height="1.3" fill="#8a8a8a"/><rect x="6" y="0" width="1.3" height="1.3" fill="#8a8a8a"/><rect x="6" y="3" width="1.3" height="1.3" fill="#8a8a8a"/><rect x="9" y="0" width="1.3" height="1.3" fill="#8a8a8a"/><rect x="9" y="3" width="1.3" height="1.3" fill="#8a8a8a"/></svg>
<div class="a" style="left:1624.3px;top:551.1px;width:287.6px;height:24.8px;background:#3d3d3d;border-radius:5px;"></div>
<svg style="left:1634.6px;top:559.0px" width="8" height="9" viewBox="0 0 8 9"><path d="M1.5 1 L5.2 4.5 L1.5 8" fill="none" stroke="#c8c8c8" stroke-width="1.1"/></svg>
<div class="a" style="left:1645.2px;top:557.7px;width:11.7px;height:11.7px;background:#545454;border-radius:3px;"></div>
<div class="tx" style="left:1661.30px;top:557.22px;color:#e6e6e6;font-size:11.7px;">Raytracing</div>
<svg style="left:1894.6px;top:561.3px" width="12" height="5" viewBox="0 0 12 5"><rect x="0" y="0" width="1.3" height="1.3" fill="#8a8a8a"/><rect x="0" y="3" width="1.3" height="1.3" fill="#8a8a8a"/><rect x="3" y="0" width="1.3" height="1.3" fill="#8a8a8a"/><rect x="3" y="3" width="1.3" height="1.3" fill="#8a8a8a"/><rect x="6" y="0" width="1.3" height="1.3" fill="#8a8a8a"/><rect x="6" y="3" width="1.3" height="1.3" fill="#8a8a8a"/><rect x="9" y="0" width="1.3" height="1.3" fill="#8a8a8a"/><rect x="9" y="3" width="1.3" height="1.3" fill="#8a8a8a"/></svg>
<div class="a" style="left:1624.3px;top:578.3px;width:287.6px;height:24.8px;background:#3d3d3d;border-radius:5px;"></div>
<svg style="left:1634.6px;top:586.1999999999999px" width="8" height="9" viewBox="0 0 8 9"><path d="M1.5 1 L5.2 4.5 L1.5 8" fill="none" stroke="#c8c8c8" stroke-width="1.1"/></svg>
<div class="tx" style="left:1646.10px;top:584.42px;color:#e6e6e6;font-size:11.7px;">Performance</div>
<svg style="left:1894.6px;top:588.4999999999999px" width="12" height="5" viewBox="0 0 12 5"><rect x="0" y="0" width="1.3" height="1.3" fill="#8a8a8a"/><rect x="0" y="3" width="1.3" height="1.3" fill="#8a8a8a"/><rect x="3" y="0" width="1.3" height="1.3" fill="#8a8a8a"/><rect x="3" y="3" width="1.3" height="1.3" fill="#8a8a8a"/><rect x="6" y="0" width="1.3" height="1.3" fill="#8a8a8a"/><rect x="6" y="3" width="1.3" height="1.3" fill="#8a8a8a"/><rect x="9" y="0" width="1.3" height="1.3" fill="#8a8a8a"/><rect x="9" y="3" width="1.3" height="1.3" fill="#8a8a8a"/></svg>
<div class="a" style="left:1624.3px;top:605.2px;width:287.6px;height:24.8px;background:#3d3d3d;border-radius:5px;"></div>
<svg style="left:1634.6px;top:613.1px" width="8" height="9" viewBox="0 0 8 9"><path d="M1.5 1 L5.2 4.5 L1.5 8" fill="none" stroke="#c8c8c8" stroke-width="1.1"/></svg>
<div class="tx" style="left:1646.10px;top:611.32px;color:#e6e6e6;font-size:11.7px;">Curves</div>
<svg style="left:1894.6px;top:615.4px" width="12" height="5" viewBox="0 0 12 5"><rect x="0" y="0" width="1.3" height="1.3" fill="#8a8a8a"/><rect x="0" y="3" width="1.3" height="1.3" fill="#8a8a8a"/><rect x="3" y="0" width="1.3" height="1.3" fill="#8a8a8a"/><rect x="3" y="3" width="1.3" height="1.3" fill="#8a8a8a"/><rect x="6" y="0" width="1.3" height="1.3" fill="#8a8a8a"/><rect x="6" y="3" width="1.3" height="1.3" fill="#8a8a8a"/><rect x="9" y="0" width="1.3" height="1.3" fill="#8a8a8a"/><rect x="9" y="3" width="1.3" height="1.3" fill="#8a8a8a"/></svg>
<div class="a" style="left:1624.3px;top:632px;width:287.6px;height:24.8px;background:#3d3d3d;border-radius:5px;"></div>
<svg style="left:1634.6px;top:639.9px" width="8" height="9" viewBox="0 0 8 9"><path d="M1.5 1 L5.2 4.5 L1.5 8" fill="none" stroke="#c8c8c8" stroke-width="1.1"/></svg>
<div class="tx" style="left:1646.10px;top:638.12px;color:#e6e6e6;font-size:11.7px;">Depth of Field</div>
<svg style="left:1894.6px;top:642.1999999999999px" width="12" height="5" viewBox="0 0 12 5"><rect x="0" y="0" width="1.3" height="1.3" fill="#8a8a8a"/><rect x="0" y="3" width="1.3" height="1.3" fill="#8a8a8a"/><rect x="3" y="0" width="1.3" height="1.3" fill="#8a8a8a"/><rect x="3" y="3" width="1.3" height="1.3" fill="#8a8a8a"/><rect x="6" y="0" width="1.3" height="1.3" fill="#8a8a8a"/><rect x="6" y="3" width="1.3" height="1.3" fill="#8a8a8a"/><rect x="9" y="0" width="1.3" height="1.3" fill="#8a8a8a"/><rect x="9" y="3" width="1.3" height="1.3" fill="#8a8a8a"/></svg>
<div class="a" style="left:1624.3px;top:659.3px;width:287.6px;height:24.8px;background:#3d3d3d;border-radius:5px;"></div>
<svg style="left:1634.6px;top:667.1999999999999px" width="8" height="9" viewBox="0 0 8 9"><path d="M1.5 1 L5.2 4.5 L1.5 8" fill="none" stroke="#c8c8c8" stroke-width="1.1"/></svg>
<div class="a" style="left:1645.2px;top:665.9px;width:11.7px;height:11.7px;background:#545454;border-radius:3px;"></div>
<div class="tx" style="left:1661.30px;top:665.42px;color:#e6e6e6;font-size:11.7px;">Motion Blur</div>
<svg style="left:1894.6px;top:669.4999999999999px" width="12" height="5" viewBox="0 0 12 5"><rect x="0" y="0" width="1.3" height="1.3" fill="#8a8a8a"/><rect x="0" y="3" width="1.3" height="1.3" fill="#8a8a8a"/><rect x="3" y="0" width="1.3" height="1.3" fill="#8a8a8a"/><rect x="3" y="3" width="1.3" height="1.3" fill="#8a8a8a"/><rect x="6" y="0" width="1.3" height="1.3" fill="#8a8a8a"/><rect x="6" y="3" width="1.3" height="1.3" fill="#8a8a8a"/><rect x="9" y="0" width="1.3" height="1.3" fill="#8a8a8a"/><rect x="9" y="3" width="1.3" height="1.3" fill="#8a8a8a"/></svg>
<div class="a" style="left:1624.3px;top:686.3px;width:287.6px;height:24.8px;background:#3d3d3d;border-radius:5px;"></div>
<svg style="left:1634.6px;top:694.1999999999999px" width="8" height="9" viewBox="0 0 8 9"><path d="M1.5 1 L5.2 4.5 L1.5 8" fill="none" stroke="#c8c8c8" stroke-width="1.1"/></svg>
<div class="tx" style="left:1646.10px;top:692.42px;color:#e6e6e6;font-size:11.7px;">Film</div>
<svg style="left:1894.6px;top:696.4999999999999px" width="12" height="5" viewBox="0 0 12 5"><rect x="0" y="0" width="1.3" height="1.3" fill="#8a8a8a"/><rect x="0" y="3" width="1.3" height="1.3" fill="#8a8a8a"/><rect x="3" y="0" width="1.3" height="1.3" fill="#8a8a8a"/><rect x="3" y="3" width="1.3" height="1.3" fill="#8a8a8a"/><rect x="6" y="0" width="1.3" height="1.3" fill="#8a8a8a"/><rect x="6" y="3" width="1.3" height="1.3" fill="#8a8a8a"/><rect x="9" y="0" width="1.3" height="1.3" fill="#8a8a8a"/><rect x="9" y="3" width="1.3" height="1.3" fill="#8a8a8a"/></svg>
<div class="a" style="left:1624.3px;top:713.3px;width:287.6px;height:24.8px;background:#3d3d3d;border-radius:5px;"></div>
<svg style="left:1634.6px;top:721.1999999999999px" width="8" height="9" viewBox="0 0 8 9"><path d="M1.5 1 L5.2 4.5 L1.5 8" fill="none" stroke="#c8c8c8" stroke-width="1.1"/></svg>
<div class="a" style="left:1645.2px;top:719.9px;width:11.7px;height:11.7px;background:#545454;border-radius:3px;"></div>
<div class="tx" style="left:1661.30px;top:719.42px;color:#e6e6e6;font-size:11.7px;">Simplify</div>
<svg style="left:1894.6px;top:723.4999999999999px" width="12" height="5" viewBox="0 0 12 5"><rect x="0" y="0" width="1.3" height="1.3" fill="#8a8a8a"/><rect x="0" y="3" width="1.3" height="1.3" fill="#8a8a8a"/><rect x="3" y="0" width="1.3" height="1.3" fill="#8a8a8a"/><rect x="3" y="3" width="1.3" height="1.3" fill="#8a8a8a"/><rect x="6" y="0" width="1.3" height="1.3" fill="#8a8a8a"/><rect x="6" y="3" width="1.3" height="1.3" fill="#8a8a8a"/><rect x="9" y="0" width="1.3" height="1.3" fill="#8a8a8a"/><rect x="9" y="3" width="1.3" height="1.3" fill="#8a8a8a"/></svg>
<div class="a" style="left:1624.3px;top:740.4px;width:287.6px;height:24.8px;background:#3d3d3d;border-radius:5px;"></div>
<svg style="left:1634.6px;top:748.3px" width="8" height="9" viewBox="0 0 8 9"><path d="M1.5 1 L5.2 4.5 L1.5 8" fill="none" stroke="#c8c8c8" stroke-width="1.1"/></svg>
<div class="tx" style="left:1646.10px;top:746.52px;color:#e6e6e6;font-size:11.7px;">Volumes</div>
<svg style="left:1894.6px;top:750.5999999999999px" width="12" height="5" viewBox="0 0 12 5"><rect x="0" y="0" width="1.3" height="1.3" fill="#8a8a8a"/><rect x="0" y="3" width="1.3" height="1.3" fill="#8a8a8a"/><rect x="3" y="0" width="1.3" height="1.3" fill="#8a8a8a"/><rect x="3" y="3" width="1.3" height="1.3" fill="#8a8a8a"/><rect x="6" y="0" width="1.3" height="1.3" fill="#8a8a8a"/><rect x="6" y="3" width="1.3" height="1.3" fill="#8a8a8a"/><rect x="9" y="0" width="1.3" height="1.3" fill="#8a8a8a"/><rect x="9" y="3" width="1.3" height="1.3" fill="#8a8a8a"/></svg>
<div class="a" style="left:1624.3px;top:767.4px;width:287.6px;height:24.8px;background:#3d3d3d;border-radius:5px;"></div>
<svg style="left:1634.6px;top:775.3px" width="8" height="9" viewBox="0 0 8 9"><path d="M1.5 1 L5.2 4.5 L1.5 8" fill="none" stroke="#c8c8c8" stroke-width="1.1"/></svg>
<div class="tx" style="left:1646.10px;top:773.52px;color:#e6e6e6;font-size:11.7px;">Grease Pencil</div>
<svg style="left:1894.6px;top:777.5999999999999px" width="12" height="5" viewBox="0 0 12 5"><rect x="0" y="0" width="1.3" height="1.3" fill="#8a8a8a"/><rect x="0" y="3" width="1.3" height="1.3" fill="#8a8a8a"/><rect x="3" y="0" width="1.3" height="1.3" fill="#8a8a8a"/><rect x="3" y="3" width="1.3" height="1.3" fill="#8a8a8a"/><rect x="6" y="0" width="1.3" height="1.3" fill="#8a8a8a"/><rect x="6" y="3" width="1.3" height="1.3" fill="#8a8a8a"/><rect x="9" y="0" width="1.3" height="1.3" fill="#8a8a8a"/><rect x="9" y="3" width="1.3" height="1.3" fill="#8a8a8a"/></svg>
<div class="a" style="left:1624.3px;top:794.4px;width:287.6px;height:24.8px;background:#3d3d3d;border-radius:5px;"></div>
<svg style="left:1634.6px;top:802.3px" width="8" height="9" viewBox="0 0 8 9"><path d="M1.5 1 L5.2 4.5 L1.5 8" fill="none" stroke="#c8c8c8" stroke-width="1.1"/></svg>
<div class="a" style="left:1645.2px;top:801.0px;width:11.7px;height:11.7px;background:#545454;border-radius:3px;"></div>
<div class="tx" style="left:1661.30px;top:800.52px;color:#e6e6e6;font-size:11.7px;">Freestyle</div>
<svg style="left:1894.6px;top:804.5999999999999px" width="12" height="5" viewBox="0 0 12 5"><rect x="0" y="0" width="1.3" height="1.3" fill="#8a8a8a"/><rect x="0" y="3" width="1.3" height="1.3" fill="#8a8a8a"/><rect x="3" y="0" width="1.3" height="1.3" fill="#8a8a8a"/><rect x="3" y="3" width="1.3" height="1.3" fill="#8a8a8a"/><rect x="6" y="0" width="1.3" height="1.3" fill="#8a8a8a"/><rect x="6" y="3" width="1.3" height="1.3" fill="#8a8a8a"/><rect x="9" y="0" width="1.3" height="1.3" fill="#8a8a8a"/><rect x="9" y="3" width="1.3" height="1.3" fill="#8a8a8a"/></svg>
<svg style="left:1868px;top:558px" width="16" height="13" viewBox="0 0 16 13"><circle cx="2" cy="2" r="1.3" fill="#e6e6e6"/><circle cx="2" cy="6.3" r="1.3" fill="#e6e6e6"/><circle cx="2" cy="10.6" r="1.3" fill="#e6e6e6"/><path d="M5.5 2 H14.5 M5.5 6.3 H14.5 M5.5 10.6 H14.5" stroke="#e6e6e6" stroke-width="1"/></svg>
<div class="a" style="left:1624.3px;top:821.3px;width:287.6px;height:236.7px;background:#3d3d3d;border-radius:5px;"></div>
<svg style="left:1632px;top:831px" width="10" height="7" viewBox="0 0 10 7"><path d="M1 1.3 L4.6 5 L8.2 1.3" fill="none" stroke="#c8c8c8" stroke-width="1.1"/></svg>
<div class="tx" style="left:1646.10px;top:827.82px;color:#e6e6e6;font-size:11.7px;">Color Management</div>
<svg style="left:1894.6px;top:831.5px" width="12" height="5" viewBox="0 0 12 5"><rect x="0" y="0" width="1.3" height="1.3" fill="#8a8a8a"/><rect x="0" y="3" width="1.3" height="1.3" fill="#8a8a8a"/><rect x="3" y="0" width="1.3" height="1.3" fill="#8a8a8a"/><rect x="3" y="3" width="1.3" height="1.3" fill="#8a8a8a"/><rect x="6" y="0" width="1.3" height="1.3" fill="#8a8a8a"/><rect x="6" y="3" width="1.3" height="1.3" fill="#8a8a8a"/><rect x="9" y="0" width="1.3" height="1.3" fill="#8a8a8a"/><rect x="9" y="3" width="1.3" height="1.3" fill="#8a8a8a"/></svg>
<div class="tx" style="left:1335.00px;width:400px;text-align:right;top:857.52px;color:#e6e6e6;font-size:11.7px;">Display Device</div>
<div class="a" style="left:1746.1px;top:855.2px;width:157px;height:17.6px;background:#282828;border-radius:4px;border:1px solid #2e2e2e"></div>
<div class="tx" style="left:1752.60px;top:857.52px;color:#e6e6e6;font-size:11.7px;">sRGB</div>
<svg style="left:1893px;top:861.2px" width="9" height="6" viewBox="0 0 9 6"><path d="M1 1 L4.5 4.5 L8 1" fill="none" stroke="#e6e6e6" stroke-width="1.2"/></svg>
<div class="tx" style="left:1335.00px;width:400px;text-align:right;top:887.52px;color:#e6e6e6;font-size:11.7px;">View Transform</div>
<div class="a" style="left:1746.1px;top:885.2px;width:157px;height:17.6px;background:#282828;border-radius:4px;border:1px solid #2e2e2e"></div>
<div class="tx" style="left:1752.60px;top:887.52px;color:#e6e6e6;font-size:11.7px;">Standard</div>
<svg style="left:1893px;top:891.2px" width="9" height="6" viewBox="0 0 9 6"><path d="M1 1 L4.5 4.5 L8 1" fill="none" stroke="#e6e6e6" stroke-width="1.2"/></svg>
<div class="tx" style="left:1335.00px;width:400px;text-align:right;top:909.52px;color:#e6e6e6;font-size:11.7px;">Look</div>
<div class="a" style="left:1746.1px;top:907.2px;width:157px;height:17.6px;background:#282828;border-radius:4px;border:1px solid #2e2e2e"></div>
<div class="tx" style="left:1752.60px;top:909.52px;color:#e6e6e6;font-size:11.7px;">None</div>
<svg style="left:1893px;top:913.2px" width="9" height="6" viewBox="0 0 9 6"><path d="M1 1 L4.5 4.5 L8 1" fill="none" stroke="#e6e6e6" stroke-width="1.2"/></svg>
<div class="tx" style="left:1335.00px;width:400px;text-align:right;top:931.32px;color:#e6e6e6;font-size:11.7px;">Exposure</div>
<div class="a" style="left:1746.1px;top:929px;width:157px;height:18px;background:#545454;border-radius:4px;"></div>
<div class="a" style="left:1746.1px;top:929px;width:76.92999999999999px;height:18px;background:#4772b3;border-radius:0px;border-radius:4px 0 0 4px"></div>
<div class="tx" style="left:1624.60px;width:400px;text-align:center;top:931.32px;color:#e6e6e6;font-size:11.7px;">0.000</div>
<div class="tx" style="left:1335.00px;width:400px;text-align:right;top:953.22px;color:#e6e6e6;font-size:11.7px;">Gamma</div>
<div class="a" style="left:1746.1px;top:950.9px;width:157px;height:18px;background:#545454;border-radius:4px;"></div>
<div class="a" style="left:1746.1px;top:950.9px;width:28.259999999999998px;height:18px;background:#4772b3;border-radius:0px;border-radius:4px 0 0 4px"></div>
<div class="tx" style="left:1624.60px;width:400px;text-align:center;top:953.22px;color:#e6e6e6;font-size:11.7px;">1.000</div>
<div class="tx" style="left:1335.00px;width:400px;text-align:right;top:983.22px;color:#e6e6e6;font-size:11.7px;">Sequencer</div>
<div class="a" style="left:1746.1px;top:980.9px;width:157px;height:17.6px;background:#282828;border-radius:4px;border:1px solid #2e2e2e"></div>
<div class="tx" style="left:1752.60px;top:983.22px;color:#e6e6e6;font-size:11.7px;">sRGB</div>
<svg style="left:1893px;top:986.9px" width="9" height="6" viewBox="0 0 9 6"><path d="M1 1 L4.5 4.5 L8 1" fill="none" stroke="#e6e6e6" stroke-width="1.2"/></svg>
<svg style="left:1648.9px;top:1016.5px" width="8" height="9" viewBox="0 0 8 9"><path d="M1.5 1 L5.2 4.5 L1.5 8" fill="none" stroke="#c8c8c8" stroke-width="1.1"/></svg>
<div class="tx" style="left:1660.00px;top:1014.32px;color:#e6e6e6;font-size:11.7px;">Display</div>
<svg style="left:1648.9px;top:1041.7px" width="8" height="9" viewBox="0 0 8 9"><path d="M1.5 1 L5.2 4.5 L1.5 8" fill="none" stroke="#c8c8c8" stroke-width="1.1"/></svg>
<div class="a" style="left:1659px;top:1040.2px;width:11.7px;height:11.7px;background:#545454;border-radius:3px;"></div>
<div class="tx" style="left:1675.20px;top:1039.32px;color:#e6e6e6;font-size:11.7px;">Use Curves</div>
</div></body></html>
